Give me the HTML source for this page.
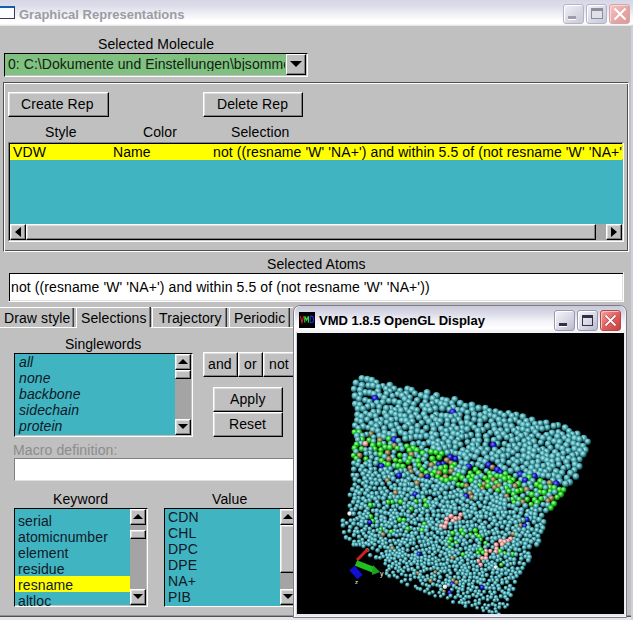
<!DOCTYPE html>
<html><head><meta charset="utf-8">
<style>
*{margin:0;padding:0;box-sizing:border-box}
html,body{width:633px;height:620px;overflow:hidden;background:#c0c0c0;font-family:"Liberation Sans",sans-serif;font-size:14px;color:#000}
.a{position:absolute}
.t{position:absolute;white-space:nowrap;line-height:1;margin-top:-1px;letter-spacing:0.1px}
.btn{position:absolute;background:#c0c0c0;border-top:1px solid #fff;border-left:1px solid #fff;border-right:1px solid #000;border-bottom:1px solid #000;box-shadow:inset -1px -1px 0 #808080, inset 1px 1px 0 #dfdfdf}
.sunk{position:absolute;border-top:1px solid #808080;border-left:1px solid #808080;border-right:1px solid #fff;border-bottom:1px solid #fff;box-shadow:inset 1px 1px 0 #000, inset -1px -1px 0 #dfdfdf}
.groove{position:absolute;border-top:1px solid #505050;border-left:1px solid #505050;border-right:1px solid #fff;border-bottom:1px solid #fff;box-shadow:inset 1px 1px 0 #fff, inset -1px -1px 0 #505050}
.teal{background:#40b4c0}
</style></head><body>
<!-- title bar -->
<div class="a" style="left:0;top:0;width:633px;height:26px;background:linear-gradient(#d6d6e6,#dedeea 25%,#f0f0f6 55%,#ffffff 80%,#ffffff 92%,#e0e0e0)"></div>
<div class="a" style="left:0;top:6px;width:15px;height:13px;border-top:2px solid #1060b0;border-right:1px solid #383858;border-bottom:1px solid #383858;background:#fcfcff"></div>
<div class="t" style="left:19px;top:9px;font-weight:bold;font-size:13px;color:#9c9ca4;letter-spacing:0">Graphical Representations</div>
<!-- main title buttons -->
<div class="a" style="left:563px;top:4px;width:21px;height:20px;border:1px solid #b4b4c8;border-radius:3px;background:linear-gradient(135deg,#f0f0f6,#dcdce6 50%,#c8c8d8);box-shadow:inset 1px 1px 0 #fff"><div class="a" style="left:4px;top:11px;width:8px;height:3px;background:#9c9cac;box-shadow:0 1px 0 #fff"></div></div>
<div class="a" style="left:586px;top:4px;width:21px;height:20px;border:1px solid #b4b4c8;border-radius:3px;background:linear-gradient(135deg,#f0f0f6,#dcdce6 50%,#c8c8d8);box-shadow:inset 1px 1px 0 #fff"><div class="a" style="left:4px;top:3px;width:12px;height:11px;border:1px solid #8c8c9c;border-top-width:3px;background:#e0e0e8"></div></div>
<div class="a" style="left:609px;top:4px;width:21px;height:20px;border:1px solid #d4a4a8;border-radius:3px;background:linear-gradient(135deg,#f4c4c4,#e8a8a8 50%,#dc9898);box-shadow:inset 1px 1px 0 #f8d8d8"><svg class="a" style="left:3px;top:2px" width="14" height="14"><path d="M1.5 1.5L12.5 12.5M12.5 1.5L1.5 12.5" stroke="#fff" stroke-width="2"/></svg></div>

<!-- Selected molecule -->
<div class="t" style="left:98px;top:38px">Selected Molecule</div>
<div class="a" style="left:4px;top:53px;width:304px;height:24px;border-top:1px solid #000;border-left:1px solid #000;border-right:1px solid #fff;border-bottom:1px solid #fff;background:#80c080;box-shadow:inset -1px -1px 0 #c0c0c0"></div>
<div class="t" style="left:8px;top:58px;width:277px;overflow:hidden;color:#102010;letter-spacing:0.05px">0: C:\Dokumente und Einstellungen\bjsommer\</div>
<div class="btn" style="left:286px;top:54px;width:20px;height:21px;box-shadow:inset -1px -1px 0 #808080"><svg class="a" style="left:3px;top:6px" width="12" height="6"><path d="M0 0H12L6 6Z" fill="#000"/></svg></div>

<!-- frame -->
<div class="groove" style="left:3px;top:82px;width:626px;height:170px"></div>
<div class="btn" style="left:8px;top:92px;width:101px;height:25px"></div>
<div class="t" style="left:21px;top:98px">Create Rep</div>
<div class="btn" style="left:203px;top:92px;width:100px;height:25px"></div>
<div class="t" style="left:217px;top:98px">Delete Rep</div>
<div class="t" style="left:45px;top:126px">Style</div>
<div class="t" style="left:143px;top:126px">Color</div>
<div class="t" style="left:231px;top:126px">Selection</div>
<!-- reps listbox -->
<div class="a" style="left:8px;top:142px;width:616px;height:100px;border-top:1px solid #808080;border-left:1px solid #808080;border-right:1px solid #fff;border-bottom:1px solid #fff;background:#000;box-shadow:inset -1px -1px 0 #c8c8c8"></div>
<div class="a teal" style="left:10px;top:144px;width:613px;height:80px;overflow:hidden">
<div class="a" style="left:0;top:0;width:613px;height:16px;background:#ffff00"></div>
<div class="t" style="left:3px;top:2px">VDW</div>
<div class="t" style="left:103px;top:2px">Name</div>
<div class="t" style="left:203px;top:2px">not ((resname 'W' 'NA+') and within 5.5 of (not resname 'W' 'NA+'))</div>
</div>
<div class="a" style="left:10px;top:224px;width:612px;height:16px;background:#a8a8a8"></div>
<div class="btn" style="left:10px;top:224px;width:16px;height:16px"><svg class="a" style="left:4px;top:2px" width="6" height="10"><path d="M6 0V10L0 5Z" fill="#000"/></svg></div>
<div class="btn" style="left:26px;top:224px;width:570px;height:16px"></div>
<div class="btn" style="left:606px;top:224px;width:16px;height:16px"><svg class="a" style="left:4px;top:2px" width="6" height="10"><path d="M0 0V10L6 5Z" fill="#000"/></svg></div>

<!-- selected atoms -->
<div class="t" style="left:267px;top:258px">Selected Atoms</div>
<div class="a" style="left:8px;top:272px;width:616px;height:30px;border-top:1px solid #c0c0c0;border-left:1px solid #c0c0c0;border-right:1px solid #fff;border-bottom:1px solid #fff;background:#fff;box-shadow:inset 1px 1px 0 #000, inset -1px -1px 0 #e0e0e0"></div>
<div class="t" style="left:11px;top:281px">not ((resname 'W' 'NA+') and within 5.5 of (not resname 'W' 'NA+'))</div>

<!-- tabs -->
<div class="a" style="left:0;top:307px;width:293px;height:1px;background:#fff"></div>
<div class="a" style="left:0;top:327px;width:76px;height:1px;background:#fff"></div>
<div class="a" style="left:151px;top:327px;width:142px;height:1px;background:#fff"></div>
<div class="a" style="left:72px;top:308px;width:1px;height:19px;background:#808080"></div>
<div class="a" style="left:73px;top:308px;width:1px;height:19px;background:#404040"></div>
<div class="a" style="left:76px;top:307px;width:1px;height:21px;background:#fff"></div>
<div class="a" style="left:149px;top:307px;width:1px;height:20px;background:#808080"></div>
<div class="a" style="left:150px;top:307px;width:1px;height:20px;background:#303030"></div>
<div class="a" style="left:152px;top:308px;width:1px;height:19px;background:#fff"></div>
<div class="a" style="left:225px;top:308px;width:1px;height:19px;background:#808080"></div>
<div class="a" style="left:226px;top:308px;width:1px;height:19px;background:#303030"></div>
<div class="a" style="left:229px;top:308px;width:1px;height:19px;background:#fff"></div>
<div class="a" style="left:288px;top:308px;width:1px;height:19px;background:#808080"></div>
<div class="a" style="left:289px;top:308px;width:1px;height:19px;background:#303030"></div>
<div class="t" style="left:4px;top:312px">Draw style</div>
<div class="t" style="left:81px;top:312px">Selections</div>
<div class="t" style="left:159px;top:312px">Trajectory</div>
<div class="t" style="left:234px;top:312px">Periodic</div>

<!-- singlewords -->
<div class="t" style="left:65px;top:338px;letter-spacing:0">Singlewords</div>
<div class="a teal" style="left:14px;top:353px;width:179px;height:84px;border-top:1px solid #000;border-left:1px solid #000;border-right:1px solid #fff;border-bottom:1px solid #fff;box-shadow:inset -1px -1px 0 #c0c0c0"></div>
<div class="t" style="left:19px;top:355px;font-style:italic;color:#101828;line-height:16px">all<br>none<br>backbone<br>sidechain<br>protein</div>
<div class="a" style="left:175px;top:354px;width:16px;height:81px;background:#a4a4a4"></div>
<div class="btn" style="left:175px;top:354px;width:16px;height:16px"><svg class="a" style="left:2px;top:4px" width="10" height="5"><path d="M0 5H10L5 0Z" fill="#000"/></svg></div>
<div class="btn" style="left:175px;top:370px;width:16px;height:9px"></div>
<div class="btn" style="left:175px;top:419px;width:16px;height:16px"><svg class="a" style="left:2px;top:4px" width="10" height="5"><path d="M0 0H10L5 5Z" fill="#000"/></svg></div>

<div class="btn" style="left:203px;top:352px;width:35px;height:25px"></div>
<div class="t" style="left:208px;top:358px">and</div>
<div class="btn" style="left:238px;top:352px;width:25px;height:25px"></div>
<div class="t" style="left:244px;top:358px">or</div>
<div class="btn" style="left:263px;top:352px;width:32px;height:25px"></div>
<div class="t" style="left:269px;top:358px">not</div>
<div class="btn" style="left:213px;top:387px;width:70px;height:25px"></div>
<div class="t" style="left:230px;top:393px">Apply</div>
<div class="btn" style="left:213px;top:412px;width:70px;height:25px"></div>
<div class="t" style="left:229px;top:418px">Reset</div>

<div class="t" style="left:13px;top:444px;color:#8c8c8c">Macro definition:</div>
<div class="a" style="left:14px;top:458px;width:290px;height:23px;border-top:1px solid #808080;border-left:1px solid #808080;border-bottom:1px solid #e0e0e0;background:#fff"></div>

<div class="t" style="left:53px;top:493px">Keyword</div>
<div class="a teal" style="left:14px;top:508px;width:134px;height:99px;border-top:1px solid #000;border-left:1px solid #000;border-right:1px solid #fff;border-bottom:1px solid #fff;box-shadow:inset -1px -1px 0 #c0c0c0"></div>
<div class="a" style="left:15px;top:576px;width:115px;height:16px;background:#ffff00"></div>
<div class="t" style="left:18px;top:514px;color:#101828;line-height:16px">serial<br>atomicnumber<br>element<br>residue<br>resname<br>altloc</div>
<div class="a" style="left:130px;top:509px;width:16px;height:97px;background:#a4a4a4"></div>
<div class="btn" style="left:130px;top:509px;width:16px;height:16px"><svg class="a" style="left:2px;top:4px" width="10" height="5"><path d="M0 5H10L5 0Z" fill="#000"/></svg></div>
<div class="btn" style="left:130px;top:530px;width:16px;height:9px"></div>
<div class="btn" style="left:130px;top:589px;width:16px;height:16px"><svg class="a" style="left:2px;top:4px" width="10" height="5"><path d="M0 0H10L5 5Z" fill="#000"/></svg></div>

<div class="t" style="left:212px;top:493px">Value</div>
<div class="a teal" style="left:164px;top:508px;width:140px;height:99px;border-top:1px solid #000;border-left:1px solid #000;border-bottom:1px solid #fff"></div>
<div class="t" style="left:168px;top:510px;color:#101828;line-height:16px">CDN<br>CHL<br>DPC<br>DPE<br>NA+<br>PIB</div>
<div class="a" style="left:280px;top:509px;width:16px;height:97px;background:#a4a4a4"></div>
<div class="btn" style="left:280px;top:509px;width:16px;height:16px"><svg class="a" style="left:2px;top:4px" width="10" height="5"><path d="M0 5H10L5 0Z" fill="#000"/></svg></div>
<div class="btn" style="left:280px;top:525px;width:16px;height:48px"></div>
<div class="btn" style="left:280px;top:589px;width:16px;height:16px"><svg class="a" style="left:2px;top:4px" width="10" height="5"><path d="M0 0H10L5 5Z" fill="#000"/></svg></div>

<div class="a" style="left:0;top:615px;width:633px;height:1px;background:#909090"></div>
<div class="a" style="left:0;top:616px;width:633px;height:1px;background:#505050"></div>
<div class="a" style="left:0;top:617px;width:633px;height:3px;background:#e4e4ea"></div>

<div class="a" style="left:631px;top:25px;width:2px;height:595px;background:#d0d0d8"></div>
<!-- VMD window -->
<div class="a" style="left:293px;top:305px;width:334px;height:313px;border-radius:7px 7px 0 0;background:#f4f4f8;border:1px solid #7c7c8c;box-shadow:inset 1px 1px 0 #ffffff"></div>
<div class="a" style="left:295px;top:306px;width:330px;height:26px;border-radius:6px 6px 0 0;background:linear-gradient(#c8c8d8,#d8d8e6 25%,#f4f4fa 60%,#ffffff 85%,#eeeef4)"></div>
<div class="a" style="left:296px;top:332px;width:329px;height:284px;border-left:1px solid #d0d0d8;border-bottom:2px solid #e8e8f0;border-right:2px solid #e8e8f0"></div>
<div class="a" style="left:297px;top:333px;width:327px;height:281px;background:#000;overflow:hidden">
<svg class="a" style="left:0;top:0" width="327" height="281" viewBox="297 333 327 281">
<defs>
<radialGradient id="st" cx="0.4" cy="0.36" r="0.64"><stop offset="0" stop-color="#bceef0"/><stop offset="0.5" stop-color="#4aa8b0"/><stop offset="1" stop-color="#12383e"/></radialGradient>
<radialGradient id="sg" cx="0.4" cy="0.36" r="0.64"><stop offset="0" stop-color="#c8ffc0"/><stop offset="0.5" stop-color="#20d020"/><stop offset="1" stop-color="#0a600a"/></radialGradient>
<radialGradient id="sb" cx="0.4" cy="0.36" r="0.64"><stop offset="0" stop-color="#8080ff"/><stop offset="0.5" stop-color="#1818c8"/><stop offset="1" stop-color="#000060"/></radialGradient>
<radialGradient id="sp" cx="0.4" cy="0.36" r="0.64"><stop offset="0" stop-color="#fff0f0"/><stop offset="0.5" stop-color="#e89898"/><stop offset="1" stop-color="#704040"/></radialGradient>
<radialGradient id="sn" cx="0.4" cy="0.36" r="0.64"><stop offset="0" stop-color="#e0d0a0"/><stop offset="0.5" stop-color="#8a7850"/><stop offset="1" stop-color="#403010"/></radialGradient>
<radialGradient id="sw" cx="0.4" cy="0.36" r="0.64"><stop offset="0" stop-color="#ffffff"/><stop offset="0.5" stop-color="#f0f0f0"/><stop offset="1" stop-color="#909090"/></radialGradient>
</defs>
<circle cx="361.9" cy="378.4" r="3.5" fill="url(#st)"/>
<circle cx="367.4" cy="379.4" r="3.6" fill="url(#st)"/>
<circle cx="371.9" cy="380.3" r="3.6" fill="url(#st)"/>
<circle cx="376.4" cy="382.6" r="3.1" fill="url(#st)"/>
<circle cx="356.0" cy="382.9" r="3.5" fill="url(#st)"/>
<circle cx="389.8" cy="385.3" r="3.6" fill="url(#st)"/>
<circle cx="362.0" cy="385.4" r="3.6" fill="url(#st)"/>
<circle cx="368.6" cy="385.6" r="3.4" fill="url(#st)"/>
<circle cx="373.1" cy="385.7" r="3.5" fill="url(#st)"/>
<circle cx="382.9" cy="386.0" r="3.1" fill="url(#st)"/>
<circle cx="378.5" cy="387.0" r="3.2" fill="url(#st)"/>
<circle cx="394.2" cy="388.8" r="3.3" fill="url(#st)"/>
<circle cx="386.1" cy="388.9" r="3.2" fill="url(#st)"/>
<circle cx="354.0" cy="389.0" r="3.2" fill="url(#st)"/>
<circle cx="407.5" cy="389.0" r="3.4" fill="url(#st)"/>
<circle cx="360.2" cy="389.9" r="3.5" fill="url(#st)"/>
<circle cx="411.7" cy="390.1" r="3.3" fill="url(#st)"/>
<circle cx="400.1" cy="390.7" r="3.2" fill="url(#st)"/>
<circle cx="390.1" cy="391.2" r="3.1" fill="url(#st)"/>
<circle cx="378.0" cy="391.5" r="3.6" fill="url(#st)"/>
<circle cx="365.5" cy="392.5" r="3.5" fill="url(#st)"/>
<circle cx="427.1" cy="392.7" r="3.6" fill="url(#st)"/>
<circle cx="370.0" cy="392.8" r="3.5" fill="url(#st)"/>
<circle cx="414.8" cy="393.4" r="3.2" fill="url(#st)"/>
<circle cx="386.5" cy="393.7" r="3.3" fill="url(#st)"/>
<circle cx="406.2" cy="393.9" r="3.6" fill="url(#st)"/>
<circle cx="374.0" cy="394.0" r="3.6" fill="url(#st)"/>
<circle cx="397.6" cy="394.3" r="3.3" fill="url(#st)"/>
<circle cx="360.3" cy="394.7" r="3.3" fill="url(#st)"/>
<circle cx="421.0" cy="395.4" r="3.5" fill="url(#st)"/>
<circle cx="436.5" cy="395.6" r="3.6" fill="url(#st)"/>
<circle cx="379.8" cy="395.8" r="3.3" fill="url(#st)"/>
<circle cx="402.3" cy="395.8" r="3.6" fill="url(#st)"/>
<circle cx="355.2" cy="396.0" r="3.7" fill="url(#st)"/>
<circle cx="392.5" cy="396.0" r="3.1" fill="url(#st)"/>
<circle cx="426.1" cy="397.3" r="3.6" fill="url(#st)"/>
<circle cx="409.9" cy="397.4" r="3.2" fill="url(#st)"/>
<circle cx="384.5" cy="397.9" r="3.5" fill="url(#st)"/>
<circle cx="375.0" cy="398.4" r="3.4" fill="url(#sb)"/>
<circle cx="432.9" cy="398.7" r="3.6" fill="url(#st)"/>
<circle cx="359.2" cy="398.9" r="3.3" fill="url(#st)"/>
<circle cx="454.7" cy="399.3" r="3.4" fill="url(#st)"/>
<circle cx="404.9" cy="399.3" r="3.5" fill="url(#st)"/>
<circle cx="442.6" cy="399.7" r="3.3" fill="url(#st)"/>
<circle cx="365.3" cy="400.2" r="3.3" fill="url(#st)"/>
<circle cx="417.2" cy="400.4" r="3.4" fill="url(#st)"/>
<circle cx="446.8" cy="400.8" r="3.6" fill="url(#st)"/>
<circle cx="389.1" cy="400.9" r="3.2" fill="url(#st)"/>
<circle cx="394.8" cy="401.4" r="3.5" fill="url(#st)"/>
<circle cx="369.5" cy="401.7" r="3.3" fill="url(#st)"/>
<circle cx="437.0" cy="401.8" r="3.4" fill="url(#st)"/>
<circle cx="425.3" cy="402.1" r="3.1" fill="url(#st)"/>
<circle cx="382.8" cy="402.3" r="3.4" fill="url(#st)"/>
<circle cx="409.0" cy="402.3" r="3.4" fill="url(#st)"/>
<circle cx="377.0" cy="402.8" r="3.3" fill="url(#st)"/>
<circle cx="399.7" cy="402.8" r="3.4" fill="url(#st)"/>
<circle cx="451.9" cy="403.1" r="3.2" fill="url(#st)"/>
<circle cx="460.3" cy="403.4" r="3.6" fill="url(#st)"/>
<circle cx="432.2" cy="403.6" r="3.2" fill="url(#st)"/>
<circle cx="441.1" cy="403.9" r="3.6" fill="url(#st)"/>
<circle cx="355.3" cy="404.0" r="3.4" fill="url(#st)"/>
<circle cx="413.9" cy="404.1" r="3.2" fill="url(#st)"/>
<circle cx="359.8" cy="404.9" r="3.3" fill="url(#st)"/>
<circle cx="445.6" cy="404.9" r="3.4" fill="url(#st)"/>
<circle cx="471.9" cy="405.3" r="3.7" fill="url(#st)"/>
<circle cx="405.9" cy="405.3" r="3.6" fill="url(#st)"/>
<circle cx="422.6" cy="405.7" r="3.5" fill="url(#st)"/>
<circle cx="372.4" cy="405.8" r="3.6" fill="url(#st)"/>
<circle cx="465.4" cy="406.1" r="3.4" fill="url(#st)"/>
<circle cx="428.3" cy="406.2" r="3.6" fill="url(#st)"/>
<circle cx="367.8" cy="406.6" r="3.4" fill="url(#st)"/>
<circle cx="379.4" cy="407.0" r="3.3" fill="url(#st)"/>
<circle cx="398.4" cy="407.3" r="3.4" fill="url(#st)"/>
<circle cx="453.3" cy="407.5" r="3.5" fill="url(#st)"/>
<circle cx="485.4" cy="408.2" r="3.4" fill="url(#st)"/>
<circle cx="478.6" cy="408.2" r="3.6" fill="url(#st)"/>
<circle cx="390.7" cy="408.3" r="3.4" fill="url(#st)"/>
<circle cx="386.4" cy="408.3" r="3.6" fill="url(#st)"/>
<circle cx="442.5" cy="408.5" r="3.5" fill="url(#st)"/>
<circle cx="435.4" cy="408.5" r="3.6" fill="url(#st)"/>
<circle cx="357.9" cy="408.8" r="3.4" fill="url(#st)"/>
<circle cx="363.2" cy="408.9" r="3.5" fill="url(#st)"/>
<circle cx="412.6" cy="409.0" r="3.7" fill="url(#st)"/>
<circle cx="449.4" cy="409.5" r="3.2" fill="url(#st)"/>
<circle cx="405.8" cy="409.7" r="3.3" fill="url(#st)"/>
<circle cx="425.3" cy="409.9" r="3.4" fill="url(#st)"/>
<circle cx="472.4" cy="410.0" r="3.6" fill="url(#st)"/>
<circle cx="457.7" cy="410.0" r="3.2" fill="url(#st)"/>
<circle cx="462.7" cy="410.1" r="3.3" fill="url(#st)"/>
<circle cx="395.2" cy="410.2" r="3.4" fill="url(#st)"/>
<circle cx="417.1" cy="410.2" r="3.2" fill="url(#st)"/>
<circle cx="430.2" cy="410.4" r="3.3" fill="url(#st)"/>
<circle cx="401.1" cy="410.7" r="3.6" fill="url(#st)"/>
<circle cx="489.5" cy="411.1" r="3.2" fill="url(#st)"/>
<circle cx="495.7" cy="411.4" r="3.2" fill="url(#st)"/>
<circle cx="378.5" cy="412.1" r="3.3" fill="url(#st)"/>
<circle cx="373.5" cy="412.1" r="3.3" fill="url(#st)"/>
<circle cx="452.8" cy="412.2" r="3.5" fill="url(#sb)"/>
<circle cx="409.6" cy="412.3" r="3.3" fill="url(#st)"/>
<circle cx="467.5" cy="412.5" r="3.3" fill="url(#st)"/>
<circle cx="391.7" cy="412.8" r="3.6" fill="url(#st)"/>
<circle cx="384.7" cy="413.0" r="3.2" fill="url(#st)"/>
<circle cx="508.6" cy="413.2" r="3.2" fill="url(#st)"/>
<circle cx="365.8" cy="413.3" r="3.1" fill="url(#st)"/>
<circle cx="485.4" cy="413.4" r="3.5" fill="url(#st)"/>
<circle cx="500.4" cy="413.4" r="3.2" fill="url(#st)"/>
<circle cx="424.0" cy="414.4" r="3.6" fill="url(#st)"/>
<circle cx="474.3" cy="414.5" r="3.4" fill="url(#st)"/>
<circle cx="436.1" cy="414.6" r="3.3" fill="url(#st)"/>
<circle cx="395.8" cy="414.6" r="3.2" fill="url(#st)"/>
<circle cx="415.8" cy="414.7" r="3.3" fill="url(#st)"/>
<circle cx="357.6" cy="414.8" r="3.5" fill="url(#st)"/>
<circle cx="516.2" cy="415.0" r="3.5" fill="url(#st)"/>
<circle cx="459.8" cy="415.0" r="3.2" fill="url(#st)"/>
<circle cx="490.3" cy="415.3" r="3.2" fill="url(#st)"/>
<circle cx="480.5" cy="415.4" r="3.4" fill="url(#st)"/>
<circle cx="370.4" cy="415.4" r="3.7" fill="url(#st)"/>
<circle cx="504.3" cy="415.7" r="3.3" fill="url(#st)"/>
<circle cx="441.8" cy="415.8" r="3.5" fill="url(#st)"/>
<circle cx="455.3" cy="415.9" r="3.4" fill="url(#st)"/>
<circle cx="400.7" cy="415.9" r="3.3" fill="url(#st)"/>
<circle cx="512.0" cy="416.1" r="3.4" fill="url(#st)"/>
<circle cx="375.6" cy="416.1" r="3.2" fill="url(#st)"/>
<circle cx="446.6" cy="416.1" r="3.7" fill="url(#st)"/>
<circle cx="404.9" cy="416.3" r="3.4" fill="url(#st)"/>
<circle cx="386.9" cy="416.7" r="3.7" fill="url(#st)"/>
<circle cx="494.9" cy="416.8" r="3.3" fill="url(#st)"/>
<circle cx="361.6" cy="416.8" r="3.7" fill="url(#st)"/>
<circle cx="522.9" cy="416.8" r="3.6" fill="url(#st)"/>
<circle cx="450.9" cy="417.0" r="3.5" fill="url(#st)"/>
<circle cx="411.6" cy="417.3" r="3.5" fill="url(#st)"/>
<circle cx="432.8" cy="417.3" r="3.5" fill="url(#st)"/>
<circle cx="419.0" cy="417.6" r="3.4" fill="url(#st)"/>
<circle cx="467.4" cy="418.2" r="3.6" fill="url(#st)"/>
<circle cx="426.2" cy="418.3" r="3.4" fill="url(#st)"/>
<circle cx="484.8" cy="418.4" r="3.6" fill="url(#st)"/>
<circle cx="396.2" cy="419.1" r="3.1" fill="url(#st)"/>
<circle cx="367.3" cy="419.6" r="3.3" fill="url(#st)"/>
<circle cx="458.7" cy="419.6" r="3.3" fill="url(#st)"/>
<circle cx="498.9" cy="419.7" r="3.5" fill="url(#st)"/>
<circle cx="515.3" cy="419.7" r="3.2" fill="url(#st)"/>
<circle cx="474.3" cy="419.7" r="3.2" fill="url(#st)"/>
<circle cx="391.4" cy="419.9" r="3.5" fill="url(#st)"/>
<circle cx="381.2" cy="420.0" r="3.6" fill="url(#st)"/>
<circle cx="532.0" cy="420.0" r="3.5" fill="url(#st)"/>
<circle cx="436.1" cy="420.0" r="3.3" fill="url(#st)"/>
<circle cx="357.2" cy="420.2" r="3.2" fill="url(#st)"/>
<circle cx="401.9" cy="420.5" r="3.2" fill="url(#st)"/>
<circle cx="447.5" cy="420.5" r="3.2" fill="url(#st)"/>
<circle cx="376.9" cy="420.7" r="3.5" fill="url(#st)"/>
<circle cx="510.4" cy="420.8" r="3.4" fill="url(#st)"/>
<circle cx="406.3" cy="420.9" r="3.6" fill="url(#st)"/>
<circle cx="480.3" cy="420.9" r="3.3" fill="url(#st)"/>
<circle cx="504.3" cy="421.1" r="3.2" fill="url(#st)"/>
<circle cx="454.1" cy="421.1" r="3.2" fill="url(#st)"/>
<circle cx="526.4" cy="421.2" r="3.4" fill="url(#st)"/>
<circle cx="440.3" cy="421.2" r="3.7" fill="url(#st)"/>
<circle cx="491.5" cy="421.3" r="3.3" fill="url(#st)"/>
<circle cx="412.4" cy="421.7" r="3.5" fill="url(#st)"/>
<circle cx="361.2" cy="421.7" r="3.2" fill="url(#st)"/>
<circle cx="429.1" cy="421.8" r="3.7" fill="url(#st)"/>
<circle cx="386.7" cy="422.5" r="3.3" fill="url(#st)"/>
<circle cx="519.6" cy="422.6" r="3.3" fill="url(#st)"/>
<circle cx="546.2" cy="422.8" r="3.4" fill="url(#st)"/>
<circle cx="466.8" cy="423.0" r="3.6" fill="url(#st)"/>
<circle cx="421.8" cy="423.0" r="3.2" fill="url(#st)"/>
<circle cx="461.5" cy="423.3" r="3.2" fill="url(#st)"/>
<circle cx="540.4" cy="423.5" r="3.3" fill="url(#st)"/>
<circle cx="371.6" cy="423.8" r="3.5" fill="url(#st)"/>
<circle cx="535.0" cy="424.0" r="3.2" fill="url(#st)"/>
<circle cx="499.9" cy="424.0" r="3.3" fill="url(#st)"/>
<circle cx="380.2" cy="424.1" r="3.3" fill="url(#st)"/>
<circle cx="471.1" cy="424.5" r="3.3" fill="url(#st)"/>
<circle cx="408.8" cy="424.5" r="3.6" fill="url(#st)"/>
<circle cx="437.2" cy="424.6" r="3.5" fill="url(#st)"/>
<circle cx="396.2" cy="424.7" r="3.2" fill="url(#st)"/>
<circle cx="523.2" cy="424.9" r="3.5" fill="url(#st)"/>
<circle cx="447.4" cy="425.1" r="3.5" fill="url(#st)"/>
<circle cx="433.0" cy="425.3" r="3.3" fill="url(#st)"/>
<circle cx="558.0" cy="425.3" r="3.3" fill="url(#st)"/>
<circle cx="480.0" cy="425.3" r="3.3" fill="url(#st)"/>
<circle cx="528.2" cy="425.3" r="3.3" fill="url(#st)"/>
<circle cx="355.1" cy="425.4" r="3.2" fill="url(#st)"/>
<circle cx="493.9" cy="425.4" r="3.4" fill="url(#st)"/>
<circle cx="506.3" cy="425.9" r="3.4" fill="url(#st)"/>
<circle cx="553.8" cy="426.0" r="3.4" fill="url(#st)"/>
<circle cx="391.2" cy="426.1" r="3.6" fill="url(#st)"/>
<circle cx="417.6" cy="426.2" r="3.4" fill="url(#st)"/>
<circle cx="453.6" cy="426.2" r="3.2" fill="url(#st)"/>
<circle cx="376.4" cy="426.4" r="3.6" fill="url(#st)"/>
<circle cx="511.7" cy="426.4" r="3.3" fill="url(#st)"/>
<circle cx="363.3" cy="426.5" r="3.5" fill="url(#st)"/>
<circle cx="487.5" cy="426.5" r="3.5" fill="url(#st)"/>
<circle cx="405.2" cy="427.1" r="3.3" fill="url(#st)"/>
<circle cx="368.3" cy="427.6" r="3.1" fill="url(#st)"/>
<circle cx="474.4" cy="427.6" r="3.2" fill="url(#st)"/>
<circle cx="547.4" cy="427.7" r="3.2" fill="url(#st)"/>
<circle cx="565.1" cy="427.7" r="3.5" fill="url(#st)"/>
<circle cx="462.2" cy="428.0" r="3.3" fill="url(#st)"/>
<circle cx="537.1" cy="428.1" r="3.4" fill="url(#st)"/>
<circle cx="426.3" cy="428.1" r="3.3" fill="url(#st)"/>
<circle cx="358.5" cy="428.2" r="3.2" fill="url(#st)"/>
<circle cx="384.4" cy="428.4" r="3.4" fill="url(#st)"/>
<circle cx="411.9" cy="428.6" r="3.3" fill="url(#st)"/>
<circle cx="399.0" cy="428.7" r="3.4" fill="url(#st)"/>
<circle cx="457.1" cy="428.8" r="3.4" fill="url(#st)"/>
<circle cx="542.2" cy="428.8" r="3.2" fill="url(#st)"/>
<circle cx="441.3" cy="429.0" r="3.5" fill="url(#st)"/>
<circle cx="518.2" cy="429.0" r="3.4" fill="url(#st)"/>
<circle cx="532.7" cy="429.1" r="3.6" fill="url(#st)"/>
<circle cx="467.3" cy="429.4" r="3.6" fill="url(#st)"/>
<circle cx="523.0" cy="429.4" r="3.3" fill="url(#st)"/>
<circle cx="433.8" cy="429.6" r="3.5" fill="url(#st)"/>
<circle cx="451.0" cy="429.6" r="3.3" fill="url(#st)"/>
<circle cx="373.0" cy="429.9" r="3.3" fill="url(#st)"/>
<circle cx="494.7" cy="430.0" r="3.6" fill="url(#st)"/>
<circle cx="482.9" cy="430.1" r="3.3" fill="url(#st)"/>
<circle cx="514.0" cy="430.5" r="3.3" fill="url(#st)"/>
<circle cx="507.3" cy="430.5" r="3.2" fill="url(#st)"/>
<circle cx="500.6" cy="430.5" r="3.4" fill="url(#st)"/>
<circle cx="393.8" cy="431.0" r="3.3" fill="url(#st)"/>
<circle cx="478.0" cy="431.0" r="3.6" fill="url(#st)"/>
<circle cx="446.3" cy="431.0" r="3.3" fill="url(#st)"/>
<circle cx="527.9" cy="431.0" r="3.2" fill="url(#st)"/>
<circle cx="377.9" cy="431.1" r="3.3" fill="url(#st)"/>
<circle cx="417.6" cy="431.1" r="3.4" fill="url(#st)"/>
<circle cx="569.1" cy="431.2" r="3.2" fill="url(#st)"/>
<circle cx="354.4" cy="432.1" r="2.9" fill="url(#sg)"/>
<circle cx="359.1" cy="432.2" r="3.0" fill="url(#sg)"/>
<circle cx="422.6" cy="432.3" r="3.2" fill="url(#st)"/>
<circle cx="558.4" cy="432.3" r="3.2" fill="url(#st)"/>
<circle cx="535.5" cy="432.4" r="3.4" fill="url(#st)"/>
<circle cx="461.9" cy="432.5" r="3.2" fill="url(#st)"/>
<circle cx="401.0" cy="432.6" r="3.4" fill="url(#st)"/>
<circle cx="384.7" cy="432.8" r="3.5" fill="url(#st)"/>
<circle cx="411.3" cy="432.8" r="3.5" fill="url(#st)"/>
<circle cx="490.3" cy="432.9" r="3.2" fill="url(#st)"/>
<circle cx="552.1" cy="433.1" r="3.6" fill="url(#st)"/>
<circle cx="517.5" cy="433.3" r="3.3" fill="url(#st)"/>
<circle cx="497.3" cy="433.5" r="3.5" fill="url(#st)"/>
<circle cx="431.9" cy="433.7" r="3.3" fill="url(#st)"/>
<circle cx="453.7" cy="433.8" r="3.7" fill="url(#st)"/>
<circle cx="577.3" cy="434.0" r="3.5" fill="url(#st)"/>
<circle cx="370.7" cy="434.1" r="3.1" fill="url(#sn)"/>
<circle cx="442.5" cy="434.1" r="3.1" fill="url(#st)"/>
<circle cx="389.5" cy="434.2" r="3.4" fill="url(#st)"/>
<circle cx="405.3" cy="434.3" r="3.4" fill="url(#st)"/>
<circle cx="572.5" cy="434.4" r="3.2" fill="url(#st)"/>
<circle cx="366.7" cy="434.4" r="2.9" fill="url(#st)"/>
<circle cx="503.6" cy="434.4" r="3.5" fill="url(#st)"/>
<circle cx="458.1" cy="434.5" r="3.2" fill="url(#st)"/>
<circle cx="562.0" cy="434.6" r="3.4" fill="url(#st)"/>
<circle cx="525.7" cy="434.9" r="3.6" fill="url(#st)"/>
<circle cx="471.0" cy="435.1" r="3.4" fill="url(#st)"/>
<circle cx="436.0" cy="435.2" r="3.6" fill="url(#st)"/>
<circle cx="546.7" cy="435.3" r="3.6" fill="url(#st)"/>
<circle cx="447.1" cy="435.5" r="3.3" fill="url(#st)"/>
<circle cx="393.8" cy="435.5" r="3.4" fill="url(#st)"/>
<circle cx="478.4" cy="435.6" r="3.5" fill="url(#st)"/>
<circle cx="538.6" cy="435.6" r="3.2" fill="url(#st)"/>
<circle cx="362.4" cy="435.8" r="3.2" fill="url(#st)"/>
<circle cx="379.7" cy="435.8" r="3.6" fill="url(#st)"/>
<circle cx="357.0" cy="435.9" r="3.3" fill="url(#st)"/>
<circle cx="426.5" cy="436.1" r="3.6" fill="url(#st)"/>
<circle cx="521.2" cy="436.1" r="3.6" fill="url(#st)"/>
<circle cx="511.1" cy="436.2" r="3.3" fill="url(#st)"/>
<circle cx="486.3" cy="436.5" r="3.6" fill="url(#st)"/>
<circle cx="466.3" cy="436.5" r="3.2" fill="url(#st)"/>
<circle cx="531.9" cy="436.5" r="3.3" fill="url(#st)"/>
<circle cx="416.3" cy="436.7" r="3.5" fill="url(#st)"/>
<circle cx="557.6" cy="436.7" r="3.7" fill="url(#st)"/>
<circle cx="568.6" cy="436.7" r="3.6" fill="url(#st)"/>
<circle cx="420.7" cy="436.9" r="3.1" fill="url(#st)"/>
<circle cx="461.8" cy="437.0" r="3.2" fill="url(#st)"/>
<circle cx="383.9" cy="437.0" r="3.6" fill="url(#st)"/>
<circle cx="373.7" cy="437.1" r="2.9" fill="url(#st)"/>
<circle cx="506.9" cy="437.5" r="3.3" fill="url(#st)"/>
<circle cx="499.3" cy="437.7" r="3.4" fill="url(#st)"/>
<circle cx="410.4" cy="438.0" r="3.5" fill="url(#st)"/>
<circle cx="564.6" cy="438.2" r="3.3" fill="url(#st)"/>
<circle cx="542.9" cy="438.2" r="3.6" fill="url(#st)"/>
<circle cx="583.9" cy="438.3" r="3.5" fill="url(#st)"/>
<circle cx="432.5" cy="438.4" r="3.6" fill="url(#st)"/>
<circle cx="451.5" cy="438.4" r="3.4" fill="url(#st)"/>
<circle cx="574.7" cy="438.4" r="3.6" fill="url(#st)"/>
<circle cx="405.5" cy="438.6" r="3.5" fill="url(#st)"/>
<circle cx="444.5" cy="438.8" r="3.3" fill="url(#st)"/>
<circle cx="388.8" cy="438.9" r="3.0" fill="url(#sg)"/>
<circle cx="549.6" cy="439.1" r="3.3" fill="url(#st)"/>
<circle cx="528.6" cy="439.3" r="3.3" fill="url(#st)"/>
<circle cx="579.4" cy="439.5" r="3.4" fill="url(#st)"/>
<circle cx="458.3" cy="439.5" r="3.1" fill="url(#st)"/>
<circle cx="517.3" cy="439.5" r="3.6" fill="url(#st)"/>
<circle cx="362.1" cy="439.6" r="3.0" fill="url(#sg)"/>
<circle cx="357.9" cy="439.8" r="3.0" fill="url(#st)"/>
<circle cx="394.2" cy="439.8" r="3.6" fill="url(#sb)"/>
<circle cx="494.0" cy="440.2" r="3.4" fill="url(#st)"/>
<circle cx="369.2" cy="440.3" r="3.0" fill="url(#sg)"/>
<circle cx="379.9" cy="440.5" r="3.1" fill="url(#sn)"/>
<circle cx="474.2" cy="440.7" r="3.3" fill="url(#st)"/>
<circle cx="512.3" cy="440.7" r="3.4" fill="url(#st)"/>
<circle cx="479.1" cy="440.7" r="3.3" fill="url(#st)"/>
<circle cx="486.9" cy="440.8" r="3.2" fill="url(#st)"/>
<circle cx="398.4" cy="440.8" r="3.1" fill="url(#st)"/>
<circle cx="568.6" cy="441.2" r="3.5" fill="url(#st)"/>
<circle cx="524.4" cy="441.2" r="3.3" fill="url(#st)"/>
<circle cx="438.2" cy="441.2" r="3.3" fill="url(#st)"/>
<circle cx="373.5" cy="441.4" r="3.0" fill="url(#st)"/>
<circle cx="554.4" cy="441.4" r="3.4" fill="url(#st)"/>
<circle cx="533.9" cy="441.7" r="3.6" fill="url(#st)"/>
<circle cx="587.7" cy="441.7" r="3.3" fill="url(#st)"/>
<circle cx="559.8" cy="442.2" r="3.6" fill="url(#st)"/>
<circle cx="467.6" cy="442.2" r="3.2" fill="url(#st)"/>
<circle cx="448.7" cy="442.3" r="3.5" fill="url(#st)"/>
<circle cx="429.1" cy="442.5" r="3.6" fill="url(#st)"/>
<circle cx="540.9" cy="442.6" r="3.2" fill="url(#st)"/>
<circle cx="455.6" cy="442.9" r="3.6" fill="url(#st)"/>
<circle cx="418.9" cy="443.1" r="3.2" fill="url(#st)"/>
<circle cx="361.0" cy="443.4" r="3.0" fill="url(#st)"/>
<circle cx="383.8" cy="443.7" r="3.0" fill="url(#st)"/>
<circle cx="433.7" cy="443.7" r="3.5" fill="url(#st)"/>
<circle cx="573.5" cy="443.7" r="3.4" fill="url(#st)"/>
<circle cx="390.5" cy="443.8" r="3.0" fill="url(#st)"/>
<circle cx="365.5" cy="443.8" r="3.0" fill="url(#sp)"/>
<circle cx="497.6" cy="443.8" r="3.2" fill="url(#st)"/>
<circle cx="548.1" cy="443.9" r="3.5" fill="url(#st)"/>
<circle cx="504.6" cy="443.9" r="3.2" fill="url(#st)"/>
<circle cx="529.5" cy="444.1" r="3.4" fill="url(#st)"/>
<circle cx="442.1" cy="444.1" r="3.5" fill="url(#st)"/>
<circle cx="424.0" cy="444.3" r="3.2" fill="url(#st)"/>
<circle cx="379.4" cy="444.3" r="3.0" fill="url(#sg)"/>
<circle cx="413.3" cy="444.4" r="3.5" fill="url(#st)"/>
<circle cx="356.6" cy="444.5" r="3.0" fill="url(#sg)"/>
<circle cx="460.6" cy="444.6" r="3.2" fill="url(#st)"/>
<circle cx="519.7" cy="444.8" r="3.1" fill="url(#st)"/>
<circle cx="485.4" cy="444.9" r="3.2" fill="url(#st)"/>
<circle cx="578.2" cy="445.0" r="3.2" fill="url(#st)"/>
<circle cx="493.3" cy="445.1" r="3.4" fill="url(#sb)"/>
<circle cx="477.1" cy="445.2" r="3.6" fill="url(#st)"/>
<circle cx="472.7" cy="445.3" r="3.4" fill="url(#st)"/>
<circle cx="566.4" cy="445.3" r="3.6" fill="url(#st)"/>
<circle cx="400.7" cy="445.5" r="3.2" fill="url(#st)"/>
<circle cx="437.6" cy="445.5" r="3.5" fill="url(#st)"/>
<circle cx="372.9" cy="445.5" r="3.2" fill="url(#sg)"/>
<circle cx="394.3" cy="445.8" r="3.0" fill="url(#sn)"/>
<circle cx="514.0" cy="445.9" r="3.5" fill="url(#st)"/>
<circle cx="525.4" cy="446.1" r="3.4" fill="url(#st)"/>
<circle cx="583.1" cy="446.1" r="3.4" fill="url(#st)"/>
<circle cx="509.2" cy="446.2" r="3.1" fill="url(#st)"/>
<circle cx="406.9" cy="446.3" r="3.0" fill="url(#sg)"/>
<circle cx="449.0" cy="446.5" r="3.4" fill="url(#st)"/>
<circle cx="558.0" cy="446.7" r="3.6" fill="url(#st)"/>
<circle cx="535.9" cy="446.8" r="3.3" fill="url(#st)"/>
<circle cx="385.1" cy="447.3" r="3.1" fill="url(#sg)"/>
<circle cx="455.5" cy="447.5" r="3.2" fill="url(#st)"/>
<circle cx="389.9" cy="447.6" r="3.2" fill="url(#sg)"/>
<circle cx="469.0" cy="447.8" r="3.1" fill="url(#st)"/>
<circle cx="421.7" cy="447.8" r="2.9" fill="url(#st)"/>
<circle cx="444.8" cy="447.8" r="3.5" fill="url(#st)"/>
<circle cx="550.5" cy="448.0" r="3.3" fill="url(#st)"/>
<circle cx="354.6" cy="448.2" r="3.1" fill="url(#sg)"/>
<circle cx="433.8" cy="448.2" r="3.7" fill="url(#st)"/>
<circle cx="397.4" cy="448.4" r="2.9" fill="url(#sg)"/>
<circle cx="413.3" cy="448.5" r="3.2" fill="url(#sg)"/>
<circle cx="562.5" cy="448.6" r="3.4" fill="url(#st)"/>
<circle cx="361.7" cy="448.9" r="3.0" fill="url(#sg)"/>
<circle cx="529.8" cy="449.0" r="3.5" fill="url(#st)"/>
<circle cx="574.6" cy="449.0" r="3.6" fill="url(#st)"/>
<circle cx="402.2" cy="449.1" r="3.0" fill="url(#st)"/>
<circle cx="517.0" cy="449.1" r="3.5" fill="url(#st)"/>
<circle cx="374.9" cy="449.1" r="2.9" fill="url(#sg)"/>
<circle cx="370.7" cy="449.2" r="2.8" fill="url(#st)"/>
<circle cx="542.8" cy="449.4" r="3.3" fill="url(#st)"/>
<circle cx="480.9" cy="449.4" r="3.7" fill="url(#st)"/>
<circle cx="439.3" cy="449.5" r="3.7" fill="url(#st)"/>
<circle cx="487.5" cy="449.6" r="3.3" fill="url(#st)"/>
<circle cx="473.4" cy="449.6" r="3.6" fill="url(#st)"/>
<circle cx="365.6" cy="449.8" r="2.8" fill="url(#st)"/>
<circle cx="494.8" cy="449.9" r="3.3" fill="url(#st)"/>
<circle cx="381.0" cy="450.0" r="2.9" fill="url(#sg)"/>
<circle cx="585.3" cy="450.1" r="3.5" fill="url(#st)"/>
<circle cx="416.9" cy="450.3" r="3.2" fill="url(#sg)"/>
<circle cx="503.1" cy="450.3" r="3.5" fill="url(#st)"/>
<circle cx="538.7" cy="450.4" r="3.2" fill="url(#st)"/>
<circle cx="409.5" cy="450.4" r="3.2" fill="url(#sg)"/>
<circle cx="463.0" cy="450.5" r="3.6" fill="url(#st)"/>
<circle cx="509.1" cy="450.5" r="3.5" fill="url(#st)"/>
<circle cx="523.6" cy="450.7" r="3.6" fill="url(#st)"/>
<circle cx="426.7" cy="450.8" r="3.1" fill="url(#st)"/>
<circle cx="580.1" cy="450.9" r="3.6" fill="url(#st)"/>
<circle cx="568.4" cy="451.0" r="3.6" fill="url(#st)"/>
<circle cx="534.1" cy="451.2" r="3.5" fill="url(#st)"/>
<circle cx="356.1" cy="451.7" r="3.1" fill="url(#st)"/>
<circle cx="546.7" cy="451.8" r="3.6" fill="url(#st)"/>
<circle cx="431.2" cy="451.9" r="3.1" fill="url(#sg)"/>
<circle cx="451.8" cy="452.0" r="3.4" fill="url(#st)"/>
<circle cx="467.5" cy="452.1" r="3.2" fill="url(#st)"/>
<circle cx="477.5" cy="452.1" r="3.6" fill="url(#st)"/>
<circle cx="394.1" cy="452.1" r="2.8" fill="url(#st)"/>
<circle cx="513.1" cy="452.4" r="3.2" fill="url(#st)"/>
<circle cx="555.2" cy="452.5" r="3.6" fill="url(#st)"/>
<circle cx="436.1" cy="452.6" r="2.9" fill="url(#sg)"/>
<circle cx="499.4" cy="452.7" r="3.6" fill="url(#st)"/>
<circle cx="447.4" cy="452.7" r="3.4" fill="url(#st)"/>
<circle cx="387.7" cy="452.9" r="3.1" fill="url(#sn)"/>
<circle cx="484.5" cy="453.3" r="3.4" fill="url(#st)"/>
<circle cx="563.3" cy="453.3" r="3.2" fill="url(#st)"/>
<circle cx="370.0" cy="453.4" r="3.2" fill="url(#st)"/>
<circle cx="422.8" cy="453.4" r="3.3" fill="url(#sg)"/>
<circle cx="455.9" cy="453.4" r="3.2" fill="url(#st)"/>
<circle cx="529.3" cy="453.4" r="3.3" fill="url(#st)"/>
<circle cx="366.1" cy="453.7" r="2.8" fill="url(#st)"/>
<circle cx="441.8" cy="453.7" r="3.0" fill="url(#sg)"/>
<circle cx="542.6" cy="453.8" r="3.2" fill="url(#st)"/>
<circle cx="460.4" cy="453.9" r="3.3" fill="url(#st)"/>
<circle cx="375.9" cy="454.0" r="2.9" fill="url(#st)"/>
<circle cx="583.2" cy="454.2" r="3.5" fill="url(#st)"/>
<circle cx="576.9" cy="454.2" r="3.2" fill="url(#st)"/>
<circle cx="492.3" cy="454.2" r="3.4" fill="url(#st)"/>
<circle cx="380.6" cy="454.5" r="3.1" fill="url(#sg)"/>
<circle cx="415.9" cy="454.6" r="3.2" fill="url(#st)"/>
<circle cx="411.4" cy="454.6" r="3.2" fill="url(#sn)"/>
<circle cx="399.9" cy="455.3" r="2.8" fill="url(#sg)"/>
<circle cx="464.6" cy="455.3" r="3.6" fill="url(#st)"/>
<circle cx="558.4" cy="455.4" r="3.3" fill="url(#st)"/>
<circle cx="353.5" cy="455.5" r="2.7" fill="url(#sg)"/>
<circle cx="359.6" cy="455.6" r="3.1" fill="url(#sn)"/>
<circle cx="572.5" cy="455.6" r="3.5" fill="url(#st)"/>
<circle cx="507.6" cy="455.6" r="3.4" fill="url(#st)"/>
<circle cx="470.7" cy="455.8" r="3.2" fill="url(#st)"/>
<circle cx="405.2" cy="456.0" r="3.2" fill="url(#st)"/>
<circle cx="518.1" cy="456.0" r="3.3" fill="url(#st)"/>
<circle cx="546.8" cy="456.1" r="3.3" fill="url(#st)"/>
<circle cx="425.9" cy="456.1" r="3.1" fill="url(#st)"/>
<circle cx="533.2" cy="456.1" r="3.6" fill="url(#st)"/>
<circle cx="524.2" cy="456.3" r="3.6" fill="url(#st)"/>
<circle cx="503.2" cy="456.4" r="3.5" fill="url(#st)"/>
<circle cx="496.7" cy="456.6" r="3.4" fill="url(#st)"/>
<circle cx="552.6" cy="456.7" r="3.6" fill="url(#st)"/>
<circle cx="384.7" cy="456.8" r="3.2" fill="url(#st)"/>
<circle cx="475.2" cy="457.0" r="3.6" fill="url(#st)"/>
<circle cx="538.3" cy="457.1" r="3.2" fill="url(#st)"/>
<circle cx="418.9" cy="457.1" r="2.8" fill="url(#st)"/>
<circle cx="392.9" cy="457.2" r="3.1" fill="url(#st)"/>
<circle cx="450.2" cy="457.4" r="3.2" fill="url(#sb)"/>
<circle cx="371.6" cy="457.4" r="2.7" fill="url(#st)"/>
<circle cx="439.3" cy="457.4" r="3.1" fill="url(#sg)"/>
<circle cx="487.2" cy="458.1" r="3.5" fill="url(#st)"/>
<circle cx="528.7" cy="458.2" r="3.5" fill="url(#st)"/>
<circle cx="568.8" cy="458.3" r="3.4" fill="url(#st)"/>
<circle cx="356.3" cy="458.5" r="2.8" fill="url(#sg)"/>
<circle cx="459.4" cy="458.5" r="2.9" fill="url(#st)"/>
<circle cx="562.8" cy="458.6" r="3.3" fill="url(#st)"/>
<circle cx="410.2" cy="458.7" r="3.2" fill="url(#sg)"/>
<circle cx="543.3" cy="458.8" r="3.5" fill="url(#st)"/>
<circle cx="432.4" cy="458.8" r="3.3" fill="url(#sg)"/>
<circle cx="365.9" cy="458.9" r="2.7" fill="url(#sg)"/>
<circle cx="467.0" cy="458.9" r="3.7" fill="url(#st)"/>
<circle cx="455.5" cy="459.0" r="2.9" fill="url(#sb)"/>
<circle cx="388.9" cy="459.1" r="3.1" fill="url(#sn)"/>
<circle cx="492.7" cy="459.1" r="3.1" fill="url(#st)"/>
<circle cx="579.6" cy="459.4" r="3.2" fill="url(#st)"/>
<circle cx="377.1" cy="459.5" r="3.1" fill="url(#st)"/>
<circle cx="423.9" cy="459.6" r="3.1" fill="url(#st)"/>
<circle cx="513.4" cy="459.7" r="3.4" fill="url(#st)"/>
<circle cx="404.9" cy="459.8" r="3.0" fill="url(#st)"/>
<circle cx="558.1" cy="460.1" r="3.4" fill="url(#st)"/>
<circle cx="395.5" cy="460.2" r="2.8" fill="url(#sg)"/>
<circle cx="574.1" cy="460.2" r="3.3" fill="url(#st)"/>
<circle cx="446.8" cy="460.3" r="3.1" fill="url(#sn)"/>
<circle cx="480.5" cy="460.3" r="3.6" fill="url(#st)"/>
<circle cx="547.2" cy="460.6" r="3.5" fill="url(#st)"/>
<circle cx="381.7" cy="460.8" r="3.0" fill="url(#sg)"/>
<circle cx="413.9" cy="461.1" r="2.9" fill="url(#st)"/>
<circle cx="400.4" cy="461.1" r="2.7" fill="url(#sg)"/>
<circle cx="521.5" cy="461.1" r="3.5" fill="url(#st)"/>
<circle cx="358.9" cy="461.1" r="2.7" fill="url(#st)"/>
<circle cx="502.9" cy="461.1" r="3.4" fill="url(#st)"/>
<circle cx="418.0" cy="461.1" r="3.2" fill="url(#sg)"/>
<circle cx="552.1" cy="461.7" r="3.5" fill="url(#st)"/>
<circle cx="497.8" cy="461.8" r="3.4" fill="url(#st)"/>
<circle cx="485.1" cy="461.8" r="3.4" fill="url(#st)"/>
<circle cx="538.0" cy="461.9" r="3.5" fill="url(#st)"/>
<circle cx="369.8" cy="462.0" r="3.1" fill="url(#st)"/>
<circle cx="408.2" cy="462.0" r="2.9" fill="url(#sg)"/>
<circle cx="517.3" cy="462.1" r="3.4" fill="url(#st)"/>
<circle cx="566.5" cy="462.2" r="3.5" fill="url(#st)"/>
<circle cx="509.4" cy="462.7" r="3.3" fill="url(#st)"/>
<circle cx="532.8" cy="462.9" r="3.4" fill="url(#st)"/>
<circle cx="451.1" cy="463.0" r="2.8" fill="url(#sn)"/>
<circle cx="461.7" cy="463.0" r="3.3" fill="url(#st)"/>
<circle cx="353.9" cy="463.1" r="2.9" fill="url(#st)"/>
<circle cx="435.0" cy="463.3" r="3.1" fill="url(#sg)"/>
<circle cx="426.7" cy="463.3" r="2.8" fill="url(#st)"/>
<circle cx="375.8" cy="463.3" r="3.1" fill="url(#st)"/>
<circle cx="466.0" cy="463.6" r="3.1" fill="url(#st)"/>
<circle cx="443.2" cy="463.7" r="2.8" fill="url(#sb)"/>
<circle cx="384.6" cy="463.8" r="3.0" fill="url(#sg)"/>
<circle cx="472.1" cy="463.9" r="2.9" fill="url(#st)"/>
<circle cx="526.8" cy="464.0" r="3.6" fill="url(#st)"/>
<circle cx="365.9" cy="464.1" r="3.1" fill="url(#st)"/>
<circle cx="438.7" cy="464.4" r="3.0" fill="url(#sb)"/>
<circle cx="454.7" cy="464.4" r="2.8" fill="url(#sg)"/>
<circle cx="558.9" cy="464.4" r="3.2" fill="url(#st)"/>
<circle cx="478.2" cy="464.5" r="3.3" fill="url(#st)"/>
<circle cx="575.0" cy="464.6" r="3.5" fill="url(#st)"/>
<circle cx="388.3" cy="464.6" r="3.0" fill="url(#sg)"/>
<circle cx="357.9" cy="464.8" r="2.9" fill="url(#st)"/>
<circle cx="548.4" cy="464.9" r="3.6" fill="url(#st)"/>
<circle cx="488.6" cy="465.0" r="3.2" fill="url(#sb)"/>
<circle cx="431.5" cy="465.1" r="3.2" fill="url(#sn)"/>
<circle cx="415.4" cy="465.2" r="3.0" fill="url(#st)"/>
<circle cx="419.3" cy="465.5" r="2.8" fill="url(#sg)"/>
<circle cx="370.1" cy="465.7" r="2.8" fill="url(#st)"/>
<circle cx="394.5" cy="465.9" r="3.1" fill="url(#st)"/>
<circle cx="398.3" cy="466.1" r="3.1" fill="url(#sg)"/>
<circle cx="543.5" cy="466.1" r="3.3" fill="url(#st)"/>
<circle cx="514.5" cy="466.1" r="3.5" fill="url(#st)"/>
<circle cx="381.4" cy="466.2" r="3.1" fill="url(#sb)"/>
<circle cx="552.8" cy="466.3" r="3.4" fill="url(#st)"/>
<circle cx="403.0" cy="466.4" r="3.0" fill="url(#sg)"/>
<circle cx="579.3" cy="466.4" r="3.4" fill="url(#st)"/>
<circle cx="500.6" cy="466.6" r="3.6" fill="url(#st)"/>
<circle cx="567.9" cy="466.6" r="3.4" fill="url(#st)"/>
<circle cx="482.1" cy="466.6" r="2.9" fill="url(#st)"/>
<circle cx="537.5" cy="466.6" r="3.6" fill="url(#st)"/>
<circle cx="468.7" cy="466.7" r="3.2" fill="url(#sb)"/>
<circle cx="424.7" cy="466.8" r="3.1" fill="url(#st)"/>
<circle cx="362.4" cy="466.9" r="3.1" fill="url(#st)"/>
<circle cx="459.4" cy="467.1" r="3.1" fill="url(#st)"/>
<circle cx="445.2" cy="467.3" r="3.1" fill="url(#sg)"/>
<circle cx="492.5" cy="467.3" r="2.9" fill="url(#sn)"/>
<circle cx="452.1" cy="467.4" r="3.1" fill="url(#sg)"/>
<circle cx="523.0" cy="467.8" r="3.3" fill="url(#st)"/>
<circle cx="410.0" cy="467.9" r="2.7" fill="url(#sn)"/>
<circle cx="531.5" cy="468.1" r="3.7" fill="url(#st)"/>
<circle cx="563.6" cy="468.2" r="3.3" fill="url(#st)"/>
<circle cx="435.5" cy="468.2" r="3.0" fill="url(#st)"/>
<circle cx="440.9" cy="468.3" r="3.2" fill="url(#sg)"/>
<circle cx="504.6" cy="468.5" r="3.6" fill="url(#st)"/>
<circle cx="465.0" cy="468.5" r="3.3" fill="url(#st)"/>
<circle cx="390.4" cy="468.9" r="2.8" fill="url(#st)"/>
<circle cx="374.8" cy="469.1" r="2.7" fill="url(#st)"/>
<circle cx="353.9" cy="469.2" r="3.0" fill="url(#st)"/>
<circle cx="371.1" cy="469.4" r="2.7" fill="url(#st)"/>
<circle cx="475.5" cy="469.5" r="2.9" fill="url(#sg)"/>
<circle cx="517.5" cy="469.5" r="3.5" fill="url(#st)"/>
<circle cx="549.2" cy="469.6" r="3.6" fill="url(#st)"/>
<circle cx="385.4" cy="469.6" r="3.1" fill="url(#st)"/>
<circle cx="422.1" cy="469.7" r="2.9" fill="url(#sg)"/>
<circle cx="497.2" cy="469.8" r="3.3" fill="url(#sb)"/>
<circle cx="456.2" cy="469.8" r="3.1" fill="url(#st)"/>
<circle cx="415.3" cy="470.0" r="3.0" fill="url(#st)"/>
<circle cx="360.5" cy="470.0" r="2.6" fill="url(#st)"/>
<circle cx="430.4" cy="470.1" r="3.1" fill="url(#st)"/>
<circle cx="574.4" cy="470.1" r="3.3" fill="url(#st)"/>
<circle cx="380.9" cy="470.4" r="2.7" fill="url(#st)"/>
<circle cx="540.8" cy="470.6" r="3.2" fill="url(#st)"/>
<circle cx="404.9" cy="470.7" r="2.9" fill="url(#st)"/>
<circle cx="400.8" cy="470.7" r="2.8" fill="url(#st)"/>
<circle cx="486.5" cy="470.8" r="2.9" fill="url(#st)"/>
<circle cx="510.8" cy="470.9" r="3.5" fill="url(#st)"/>
<circle cx="365.7" cy="471.0" r="2.8" fill="url(#st)"/>
<circle cx="526.3" cy="471.1" r="3.1" fill="url(#st)"/>
<circle cx="451.1" cy="471.4" r="3.2" fill="url(#sn)"/>
<circle cx="445.3" cy="471.5" r="3.0" fill="url(#sg)"/>
<circle cx="534.8" cy="471.7" r="3.3" fill="url(#st)"/>
<circle cx="459.4" cy="471.8" r="3.2" fill="url(#st)"/>
<circle cx="556.2" cy="471.8" r="3.7" fill="url(#st)"/>
<circle cx="411.0" cy="471.8" r="2.9" fill="url(#sn)"/>
<circle cx="545.6" cy="471.9" r="3.3" fill="url(#st)"/>
<circle cx="463.4" cy="472.1" r="3.2" fill="url(#st)"/>
<circle cx="434.8" cy="472.1" r="3.2" fill="url(#sg)"/>
<circle cx="396.9" cy="472.3" r="3.0" fill="url(#st)"/>
<circle cx="500.6" cy="472.5" r="3.0" fill="url(#sb)"/>
<circle cx="387.8" cy="472.6" r="3.0" fill="url(#st)"/>
<circle cx="369.9" cy="472.8" r="2.8" fill="url(#st)"/>
<circle cx="418.1" cy="473.0" r="3.0" fill="url(#st)"/>
<circle cx="562.0" cy="473.0" r="3.4" fill="url(#st)"/>
<circle cx="426.5" cy="473.0" r="3.0" fill="url(#sg)"/>
<circle cx="470.3" cy="473.1" r="2.8" fill="url(#sg)"/>
<circle cx="489.6" cy="473.1" r="2.8" fill="url(#sg)"/>
<circle cx="439.1" cy="473.1" r="3.1" fill="url(#sn)"/>
<circle cx="570.6" cy="473.2" r="3.6" fill="url(#st)"/>
<circle cx="478.8" cy="473.2" r="3.3" fill="url(#sg)"/>
<circle cx="530.0" cy="473.4" r="3.6" fill="url(#st)"/>
<circle cx="375.8" cy="473.7" r="3.0" fill="url(#st)"/>
<circle cx="493.6" cy="473.8" r="2.9" fill="url(#st)"/>
<circle cx="383.7" cy="473.8" r="2.9" fill="url(#st)"/>
<circle cx="505.5" cy="473.9" r="3.0" fill="url(#sg)"/>
<circle cx="363.1" cy="474.1" r="3.0" fill="url(#st)"/>
<circle cx="407.5" cy="474.2" r="3.1" fill="url(#st)"/>
<circle cx="454.5" cy="474.4" r="2.8" fill="url(#st)"/>
<circle cx="538.7" cy="474.5" r="3.6" fill="url(#st)"/>
<circle cx="520.4" cy="474.5" r="3.6" fill="url(#sb)"/>
<circle cx="392.1" cy="474.6" r="3.1" fill="url(#st)"/>
<circle cx="432.0" cy="475.0" r="2.8" fill="url(#sg)"/>
<circle cx="353.1" cy="475.1" r="2.7" fill="url(#st)"/>
<circle cx="458.3" cy="475.4" r="3.0" fill="url(#sg)"/>
<circle cx="553.6" cy="475.5" r="3.4" fill="url(#st)"/>
<circle cx="357.0" cy="475.5" r="2.8" fill="url(#st)"/>
<circle cx="404.0" cy="475.5" r="2.9" fill="url(#st)"/>
<circle cx="543.3" cy="475.5" r="3.3" fill="url(#st)"/>
<circle cx="398.9" cy="475.6" r="2.9" fill="url(#sb)"/>
<circle cx="524.7" cy="475.6" r="3.2" fill="url(#st)"/>
<circle cx="372.8" cy="475.6" r="2.6" fill="url(#st)"/>
<circle cx="421.2" cy="475.7" r="3.0" fill="url(#sn)"/>
<circle cx="515.5" cy="475.7" r="2.9" fill="url(#st)"/>
<circle cx="481.5" cy="475.9" r="3.2" fill="url(#st)"/>
<circle cx="368.1" cy="475.9" r="2.7" fill="url(#st)"/>
<circle cx="548.8" cy="476.0" r="3.4" fill="url(#st)"/>
<circle cx="497.1" cy="476.1" r="3.1" fill="url(#sg)"/>
<circle cx="534.4" cy="476.2" r="3.2" fill="url(#sb)"/>
<circle cx="379.2" cy="476.4" r="2.8" fill="url(#st)"/>
<circle cx="501.1" cy="476.4" r="2.9" fill="url(#sg)"/>
<circle cx="472.7" cy="476.4" r="3.2" fill="url(#sg)"/>
<circle cx="427.6" cy="476.5" r="3.0" fill="url(#sb)"/>
<circle cx="575.9" cy="476.5" r="3.5" fill="url(#st)"/>
<circle cx="412.3" cy="476.7" r="3.0" fill="url(#st)"/>
<circle cx="437.7" cy="476.8" r="2.8" fill="url(#sg)"/>
<circle cx="490.5" cy="476.8" r="3.2" fill="url(#sg)"/>
<circle cx="445.3" cy="477.1" r="3.1" fill="url(#sn)"/>
<circle cx="389.1" cy="477.2" r="2.9" fill="url(#st)"/>
<circle cx="468.7" cy="477.2" r="2.8" fill="url(#sg)"/>
<circle cx="558.7" cy="477.3" r="3.5" fill="url(#st)"/>
<circle cx="385.0" cy="477.5" r="2.9" fill="url(#st)"/>
<circle cx="529.2" cy="477.6" r="3.3" fill="url(#sg)"/>
<circle cx="485.0" cy="477.9" r="2.9" fill="url(#sg)"/>
<circle cx="462.3" cy="478.0" r="3.2" fill="url(#sg)"/>
<circle cx="567.0" cy="478.0" r="3.4" fill="url(#st)"/>
<circle cx="476.7" cy="478.0" r="3.1" fill="url(#st)"/>
<circle cx="509.0" cy="478.0" r="3.0" fill="url(#sg)"/>
<circle cx="451.1" cy="478.2" r="3.0" fill="url(#sg)"/>
<circle cx="364.9" cy="478.5" r="2.9" fill="url(#st)"/>
<circle cx="415.4" cy="478.8" r="2.9" fill="url(#st)"/>
<circle cx="393.4" cy="478.9" r="2.9" fill="url(#st)"/>
<circle cx="504.6" cy="478.9" r="3.3" fill="url(#sg)"/>
<circle cx="370.9" cy="479.0" r="2.8" fill="url(#st)"/>
<circle cx="408.7" cy="479.3" r="3.0" fill="url(#st)"/>
<circle cx="455.5" cy="479.4" r="3.0" fill="url(#sg)"/>
<circle cx="355.1" cy="479.4" r="2.8" fill="url(#st)"/>
<circle cx="441.9" cy="479.5" r="3.1" fill="url(#sg)"/>
<circle cx="432.6" cy="479.7" r="2.8" fill="url(#st)"/>
<circle cx="521.0" cy="479.7" r="2.9" fill="url(#st)"/>
<circle cx="493.3" cy="479.8" r="2.9" fill="url(#sn)"/>
<circle cx="375.6" cy="479.8" r="2.6" fill="url(#st)"/>
<circle cx="513.1" cy="479.8" r="2.8" fill="url(#sg)"/>
<circle cx="419.1" cy="480.2" r="3.0" fill="url(#st)"/>
<circle cx="525.3" cy="480.2" r="3.0" fill="url(#sb)"/>
<circle cx="422.9" cy="480.3" r="2.7" fill="url(#st)"/>
<circle cx="387.3" cy="480.4" r="2.6" fill="url(#sn)"/>
<circle cx="553.0" cy="480.4" r="3.2" fill="url(#st)"/>
<circle cx="402.2" cy="480.6" r="2.7" fill="url(#st)"/>
<circle cx="471.4" cy="480.6" r="3.2" fill="url(#sg)"/>
<circle cx="465.4" cy="480.7" r="2.9" fill="url(#st)"/>
<circle cx="380.2" cy="480.7" r="2.7" fill="url(#st)"/>
<circle cx="446.6" cy="480.8" r="3.1" fill="url(#sg)"/>
<circle cx="532.7" cy="480.9" r="3.1" fill="url(#st)"/>
<circle cx="436.8" cy="481.1" r="2.9" fill="url(#st)"/>
<circle cx="500.2" cy="481.1" r="2.9" fill="url(#st)"/>
<circle cx="359.4" cy="481.1" r="2.6" fill="url(#st)"/>
<circle cx="398.0" cy="481.2" r="2.7" fill="url(#st)"/>
<circle cx="540.3" cy="481.2" r="3.2" fill="url(#sg)"/>
<circle cx="426.7" cy="481.4" r="2.9" fill="url(#st)"/>
<circle cx="560.0" cy="481.4" r="3.3" fill="url(#st)"/>
<circle cx="405.8" cy="481.5" r="2.9" fill="url(#st)"/>
<circle cx="479.7" cy="481.9" r="2.9" fill="url(#st)"/>
<circle cx="487.9" cy="482.1" r="3.2" fill="url(#sg)"/>
<circle cx="366.7" cy="482.1" r="2.8" fill="url(#st)"/>
<circle cx="569.6" cy="482.3" r="3.6" fill="url(#st)"/>
<circle cx="510.1" cy="482.5" r="3.2" fill="url(#sg)"/>
<circle cx="475.8" cy="482.5" r="2.9" fill="url(#st)"/>
<circle cx="430.2" cy="482.5" r="2.9" fill="url(#st)"/>
<circle cx="544.1" cy="483.0" r="3.0" fill="url(#st)"/>
<circle cx="549.6" cy="483.1" r="3.2" fill="url(#sn)"/>
<circle cx="496.6" cy="483.1" r="3.1" fill="url(#sg)"/>
<circle cx="416.9" cy="483.2" r="3.1" fill="url(#sn)"/>
<circle cx="453.6" cy="483.4" r="3.0" fill="url(#st)"/>
<circle cx="363.2" cy="483.5" r="2.6" fill="url(#st)"/>
<circle cx="372.1" cy="483.5" r="2.9" fill="url(#st)"/>
<circle cx="529.6" cy="483.6" r="3.2" fill="url(#st)"/>
<circle cx="389.5" cy="483.6" r="2.9" fill="url(#st)"/>
<circle cx="439.9" cy="483.7" r="2.9" fill="url(#st)"/>
<circle cx="565.5" cy="483.8" r="3.6" fill="url(#st)"/>
<circle cx="376.8" cy="483.8" r="2.7" fill="url(#st)"/>
<circle cx="382.5" cy="483.9" r="2.6" fill="url(#st)"/>
<circle cx="518.3" cy="484.0" r="3.2" fill="url(#sg)"/>
<circle cx="556.2" cy="484.0" r="3.5" fill="url(#sb)"/>
<circle cx="449.2" cy="484.1" r="2.9" fill="url(#st)"/>
<circle cx="483.9" cy="484.2" r="2.9" fill="url(#sn)"/>
<circle cx="408.6" cy="484.3" r="2.8" fill="url(#st)"/>
<circle cx="491.6" cy="484.5" r="3.1" fill="url(#st)"/>
<circle cx="505.5" cy="484.5" r="3.0" fill="url(#st)"/>
<circle cx="458.5" cy="484.6" r="2.7" fill="url(#sg)"/>
<circle cx="536.8" cy="484.7" r="3.2" fill="url(#sg)"/>
<circle cx="400.9" cy="484.7" r="2.8" fill="url(#st)"/>
<circle cx="354.9" cy="484.8" r="2.6" fill="url(#st)"/>
<circle cx="412.1" cy="484.8" r="3.0" fill="url(#st)"/>
<circle cx="462.5" cy="485.1" r="2.7" fill="url(#sg)"/>
<circle cx="422.7" cy="485.2" r="2.8" fill="url(#st)"/>
<circle cx="405.1" cy="485.3" r="3.0" fill="url(#st)"/>
<circle cx="524.4" cy="485.4" r="3.2" fill="url(#st)"/>
<circle cx="472.7" cy="485.6" r="2.9" fill="url(#st)"/>
<circle cx="443.5" cy="485.6" r="3.1" fill="url(#st)"/>
<circle cx="479.5" cy="485.7" r="3.0" fill="url(#sg)"/>
<circle cx="394.8" cy="485.7" r="2.7" fill="url(#st)"/>
<circle cx="466.4" cy="485.9" r="2.8" fill="url(#sn)"/>
<circle cx="499.2" cy="485.9" r="3.1" fill="url(#sn)"/>
<circle cx="515.1" cy="486.2" r="3.1" fill="url(#sn)"/>
<circle cx="427.0" cy="486.3" r="3.0" fill="url(#st)"/>
<circle cx="488.1" cy="486.3" r="3.1" fill="url(#sg)"/>
<circle cx="509.7" cy="486.4" r="3.2" fill="url(#st)"/>
<circle cx="433.4" cy="486.6" r="2.9" fill="url(#st)"/>
<circle cx="437.3" cy="486.7" r="2.9" fill="url(#st)"/>
<circle cx="366.1" cy="486.7" r="2.9" fill="url(#st)"/>
<circle cx="540.8" cy="486.8" r="3.0" fill="url(#sg)"/>
<circle cx="549.9" cy="487.4" r="3.1" fill="url(#sg)"/>
<circle cx="358.2" cy="487.5" r="2.6" fill="url(#st)"/>
<circle cx="391.6" cy="487.5" r="2.7" fill="url(#st)"/>
<circle cx="531.3" cy="487.5" r="2.9" fill="url(#st)"/>
<circle cx="476.0" cy="487.5" r="3.1" fill="url(#st)"/>
<circle cx="452.1" cy="487.6" r="2.7" fill="url(#st)"/>
<circle cx="494.7" cy="487.6" r="2.9" fill="url(#sn)"/>
<circle cx="446.4" cy="487.7" r="2.8" fill="url(#st)"/>
<circle cx="545.6" cy="487.8" r="3.0" fill="url(#st)"/>
<circle cx="554.3" cy="487.9" r="3.1" fill="url(#sg)"/>
<circle cx="370.0" cy="487.9" r="2.6" fill="url(#st)"/>
<circle cx="417.0" cy="487.9" r="2.8" fill="url(#st)"/>
<circle cx="506.2" cy="488.2" r="3.2" fill="url(#sg)"/>
<circle cx="374.7" cy="488.4" r="2.5" fill="url(#st)"/>
<circle cx="384.7" cy="488.4" r="2.5" fill="url(#st)"/>
<circle cx="502.1" cy="488.6" r="2.9" fill="url(#st)"/>
<circle cx="380.3" cy="489.0" r="2.8" fill="url(#st)"/>
<circle cx="482.4" cy="489.0" r="2.7" fill="url(#sn)"/>
<circle cx="470.2" cy="489.2" r="3.1" fill="url(#st)"/>
<circle cx="395.4" cy="489.2" r="2.6" fill="url(#st)"/>
<circle cx="399.5" cy="489.2" r="2.8" fill="url(#st)"/>
<circle cx="424.5" cy="489.4" r="3.0" fill="url(#st)"/>
<circle cx="352.7" cy="489.5" r="2.8" fill="url(#st)"/>
<circle cx="559.5" cy="489.6" r="2.9" fill="url(#sg)"/>
<circle cx="526.6" cy="489.7" r="3.2" fill="url(#sn)"/>
<circle cx="405.0" cy="489.7" r="2.9" fill="url(#st)"/>
<circle cx="409.1" cy="489.7" r="3.0" fill="url(#st)"/>
<circle cx="563.6" cy="489.8" r="2.9" fill="url(#sg)"/>
<circle cx="441.6" cy="489.8" r="3.1" fill="url(#st)"/>
<circle cx="435.5" cy="489.9" r="2.8" fill="url(#st)"/>
<circle cx="413.5" cy="490.2" r="2.8" fill="url(#st)"/>
<circle cx="458.4" cy="490.2" r="2.9" fill="url(#st)"/>
<circle cx="513.6" cy="490.3" r="2.7" fill="url(#st)"/>
<circle cx="521.0" cy="490.3" r="3.0" fill="url(#sg)"/>
<circle cx="362.0" cy="490.3" r="2.6" fill="url(#st)"/>
<circle cx="497.8" cy="490.4" r="2.8" fill="url(#sg)"/>
<circle cx="536.1" cy="490.5" r="2.8" fill="url(#st)"/>
<circle cx="367.7" cy="490.6" r="2.8" fill="url(#st)"/>
<circle cx="465.2" cy="490.9" r="3.0" fill="url(#st)"/>
<circle cx="490.6" cy="491.1" r="3.1" fill="url(#st)"/>
<circle cx="478.4" cy="491.1" r="3.1" fill="url(#st)"/>
<circle cx="517.3" cy="491.2" r="3.0" fill="url(#sg)"/>
<circle cx="508.9" cy="491.3" r="2.7" fill="url(#sg)"/>
<circle cx="550.2" cy="491.5" r="2.8" fill="url(#sg)"/>
<circle cx="417.8" cy="491.6" r="3.0" fill="url(#st)"/>
<circle cx="387.1" cy="491.6" r="2.7" fill="url(#st)"/>
<circle cx="356.6" cy="491.7" r="2.8" fill="url(#st)"/>
<circle cx="473.9" cy="491.8" r="2.8" fill="url(#st)"/>
<circle cx="430.2" cy="492.1" r="3.0" fill="url(#st)"/>
<circle cx="461.5" cy="492.1" r="2.7" fill="url(#st)"/>
<circle cx="454.6" cy="492.1" r="2.8" fill="url(#st)"/>
<circle cx="539.9" cy="492.2" r="2.9" fill="url(#sg)"/>
<circle cx="554.8" cy="492.2" r="3.2" fill="url(#st)"/>
<circle cx="484.1" cy="492.3" r="3.1" fill="url(#st)"/>
<circle cx="503.9" cy="492.4" r="3.0" fill="url(#st)"/>
<circle cx="544.2" cy="492.6" r="3.1" fill="url(#sg)"/>
<circle cx="426.3" cy="492.8" r="2.7" fill="url(#st)"/>
<circle cx="395.5" cy="492.8" r="2.8" fill="url(#sn)"/>
<circle cx="400.3" cy="492.9" r="2.6" fill="url(#st)"/>
<circle cx="382.1" cy="492.9" r="2.8" fill="url(#st)"/>
<circle cx="411.6" cy="493.1" r="2.7" fill="url(#st)"/>
<circle cx="450.9" cy="493.2" r="2.6" fill="url(#st)"/>
<circle cx="528.2" cy="493.2" r="2.8" fill="url(#st)"/>
<circle cx="422.6" cy="493.2" r="2.7" fill="url(#st)"/>
<circle cx="359.6" cy="493.3" r="2.8" fill="url(#st)"/>
<circle cx="470.0" cy="493.3" r="2.7" fill="url(#sn)"/>
<circle cx="438.4" cy="493.5" r="2.8" fill="url(#st)"/>
<circle cx="445.4" cy="493.5" r="3.0" fill="url(#st)"/>
<circle cx="376.6" cy="493.6" r="2.9" fill="url(#st)"/>
<circle cx="365.5" cy="493.6" r="2.7" fill="url(#st)"/>
<circle cx="403.7" cy="493.6" r="2.5" fill="url(#st)"/>
<circle cx="372.1" cy="493.8" r="2.8" fill="url(#st)"/>
<circle cx="434.6" cy="494.1" r="2.7" fill="url(#st)"/>
<circle cx="415.2" cy="494.2" r="2.8" fill="url(#sb)"/>
<circle cx="391.2" cy="494.2" r="2.5" fill="url(#st)"/>
<circle cx="513.5" cy="494.3" r="2.8" fill="url(#sg)"/>
<circle cx="495.9" cy="494.4" r="2.9" fill="url(#st)"/>
<circle cx="487.8" cy="494.5" r="2.9" fill="url(#st)"/>
<circle cx="531.9" cy="494.5" r="3.2" fill="url(#sg)"/>
<circle cx="560.9" cy="494.6" r="3.1" fill="url(#sg)"/>
<circle cx="476.5" cy="494.7" r="2.8" fill="url(#st)"/>
<circle cx="354.8" cy="494.9" r="2.5" fill="url(#st)"/>
<circle cx="350.0" cy="494.9" r="2.5" fill="url(#st)"/>
<circle cx="536.9" cy="494.9" r="3.0" fill="url(#st)"/>
<circle cx="481.0" cy="495.0" r="2.8" fill="url(#st)"/>
<circle cx="549.2" cy="495.2" r="3.2" fill="url(#st)"/>
<circle cx="457.3" cy="495.4" r="2.9" fill="url(#st)"/>
<circle cx="385.2" cy="495.4" r="2.8" fill="url(#st)"/>
<circle cx="407.8" cy="495.7" r="2.6" fill="url(#st)"/>
<circle cx="461.6" cy="495.9" r="3.1" fill="url(#st)"/>
<circle cx="501.3" cy="496.0" r="2.9" fill="url(#st)"/>
<circle cx="522.9" cy="496.0" r="3.0" fill="url(#st)"/>
<circle cx="506.6" cy="496.2" r="2.8" fill="url(#sn)"/>
<circle cx="368.8" cy="496.3" r="2.7" fill="url(#st)"/>
<circle cx="466.2" cy="496.3" r="2.9" fill="url(#sb)"/>
<circle cx="418.5" cy="496.7" r="2.7" fill="url(#st)"/>
<circle cx="401.6" cy="496.8" r="2.7" fill="url(#st)"/>
<circle cx="450.0" cy="496.9" r="2.8" fill="url(#st)"/>
<circle cx="453.7" cy="496.9" r="2.7" fill="url(#st)"/>
<circle cx="393.7" cy="497.1" r="2.8" fill="url(#st)"/>
<circle cx="372.2" cy="497.3" r="2.7" fill="url(#st)"/>
<circle cx="557.1" cy="497.3" r="2.9" fill="url(#sg)"/>
<circle cx="471.9" cy="497.3" r="2.9" fill="url(#sn)"/>
<circle cx="397.8" cy="497.4" r="2.7" fill="url(#st)"/>
<circle cx="515.7" cy="497.5" r="3.0" fill="url(#st)"/>
<circle cx="440.3" cy="497.5" r="2.7" fill="url(#st)"/>
<circle cx="491.7" cy="497.6" r="3.0" fill="url(#st)"/>
<circle cx="423.1" cy="497.6" r="2.8" fill="url(#st)"/>
<circle cx="390.1" cy="497.7" r="2.7" fill="url(#st)"/>
<circle cx="378.9" cy="497.8" r="2.7" fill="url(#st)"/>
<circle cx="358.6" cy="498.2" r="2.6" fill="url(#st)"/>
<circle cx="497.3" cy="498.2" r="3.0" fill="url(#st)"/>
<circle cx="445.9" cy="498.3" r="3.0" fill="url(#st)"/>
<circle cx="412.2" cy="498.3" r="2.9" fill="url(#st)"/>
<circle cx="475.6" cy="498.3" r="2.9" fill="url(#st)"/>
<circle cx="544.8" cy="498.3" r="3.0" fill="url(#st)"/>
<circle cx="551.4" cy="498.4" r="3.0" fill="url(#sn)"/>
<circle cx="383.5" cy="498.6" r="2.8" fill="url(#st)"/>
<circle cx="487.0" cy="498.7" r="3.0" fill="url(#st)"/>
<circle cx="354.9" cy="498.7" r="2.8" fill="url(#st)"/>
<circle cx="481.4" cy="498.8" r="2.7" fill="url(#st)"/>
<circle cx="541.1" cy="498.8" r="2.9" fill="url(#sg)"/>
<circle cx="429.7" cy="498.8" r="2.7" fill="url(#st)"/>
<circle cx="363.5" cy="498.9" r="2.8" fill="url(#st)"/>
<circle cx="375.5" cy="498.9" r="2.7" fill="url(#st)"/>
<circle cx="463.3" cy="499.1" r="3.0" fill="url(#st)"/>
<circle cx="512.5" cy="499.3" r="2.7" fill="url(#sg)"/>
<circle cx="527.2" cy="499.4" r="2.8" fill="url(#sg)"/>
<circle cx="519.1" cy="499.5" r="2.9" fill="url(#sg)"/>
<circle cx="501.3" cy="499.6" r="2.8" fill="url(#st)"/>
<circle cx="405.7" cy="499.6" r="2.9" fill="url(#st)"/>
<circle cx="508.4" cy="499.6" r="2.7" fill="url(#st)"/>
<circle cx="534.6" cy="499.8" r="2.9" fill="url(#sg)"/>
<circle cx="436.3" cy="500.1" r="2.8" fill="url(#st)"/>
<circle cx="425.4" cy="500.5" r="2.7" fill="url(#sg)"/>
<circle cx="369.3" cy="500.7" r="2.7" fill="url(#st)"/>
<circle cx="504.9" cy="500.9" r="3.1" fill="url(#st)"/>
<circle cx="457.5" cy="500.9" r="2.9" fill="url(#st)"/>
<circle cx="396.1" cy="500.9" r="2.8" fill="url(#st)"/>
<circle cx="547.9" cy="500.9" r="2.8" fill="url(#sn)"/>
<circle cx="467.9" cy="501.0" r="2.8" fill="url(#st)"/>
<circle cx="493.5" cy="501.0" r="2.9" fill="url(#st)"/>
<circle cx="420.1" cy="501.3" r="2.7" fill="url(#st)"/>
<circle cx="365.8" cy="501.3" r="2.6" fill="url(#st)"/>
<circle cx="415.8" cy="501.6" r="2.7" fill="url(#sg)"/>
<circle cx="443.0" cy="501.8" r="2.8" fill="url(#st)"/>
<circle cx="400.7" cy="501.9" r="2.8" fill="url(#sg)"/>
<circle cx="522.8" cy="502.0" r="2.8" fill="url(#sn)"/>
<circle cx="358.5" cy="502.0" r="2.6" fill="url(#st)"/>
<circle cx="392.2" cy="502.0" r="2.5" fill="url(#sg)"/>
<circle cx="497.1" cy="502.1" r="2.8" fill="url(#st)"/>
<circle cx="377.2" cy="502.2" r="2.6" fill="url(#st)"/>
<circle cx="353.3" cy="502.2" r="2.6" fill="url(#st)"/>
<circle cx="388.0" cy="502.2" r="2.8" fill="url(#sg)"/>
<circle cx="428.4" cy="502.3" r="2.8" fill="url(#st)"/>
<circle cx="452.6" cy="502.4" r="2.8" fill="url(#st)"/>
<circle cx="461.1" cy="502.4" r="2.8" fill="url(#st)"/>
<circle cx="485.3" cy="502.5" r="2.7" fill="url(#st)"/>
<circle cx="514.2" cy="502.6" r="2.7" fill="url(#sg)"/>
<circle cx="537.2" cy="502.6" r="3.2" fill="url(#sg)"/>
<circle cx="447.9" cy="502.7" r="2.8" fill="url(#st)"/>
<circle cx="433.3" cy="502.8" r="2.8" fill="url(#st)"/>
<circle cx="471.5" cy="502.8" r="2.6" fill="url(#st)"/>
<circle cx="384.5" cy="503.1" r="2.6" fill="url(#st)"/>
<circle cx="478.5" cy="503.1" r="2.6" fill="url(#st)"/>
<circle cx="409.7" cy="503.6" r="2.9" fill="url(#st)"/>
<circle cx="518.2" cy="503.6" r="3.1" fill="url(#st)"/>
<circle cx="554.0" cy="503.7" r="3.1" fill="url(#sg)"/>
<circle cx="404.2" cy="503.7" r="2.5" fill="url(#st)"/>
<circle cx="436.7" cy="503.7" r="2.8" fill="url(#st)"/>
<circle cx="500.4" cy="503.8" r="2.7" fill="url(#st)"/>
<circle cx="490.8" cy="504.0" r="2.8" fill="url(#st)"/>
<circle cx="413.4" cy="504.4" r="2.9" fill="url(#st)"/>
<circle cx="531.1" cy="504.4" r="2.7" fill="url(#sg)"/>
<circle cx="504.8" cy="504.5" r="3.1" fill="url(#st)"/>
<circle cx="362.4" cy="504.6" r="2.8" fill="url(#st)"/>
<circle cx="543.1" cy="504.6" r="2.9" fill="url(#st)"/>
<circle cx="547.9" cy="505.1" r="3.1" fill="url(#st)"/>
<circle cx="373.8" cy="505.1" r="2.6" fill="url(#st)"/>
<circle cx="370.4" cy="505.2" r="2.8" fill="url(#sg)"/>
<circle cx="463.5" cy="505.3" r="2.6" fill="url(#st)"/>
<circle cx="474.2" cy="505.3" r="2.8" fill="url(#st)"/>
<circle cx="454.5" cy="505.4" r="2.9" fill="url(#st)"/>
<circle cx="440.8" cy="505.5" r="2.8" fill="url(#st)"/>
<circle cx="420.1" cy="505.7" r="2.6" fill="url(#st)"/>
<circle cx="379.1" cy="505.7" r="2.7" fill="url(#st)"/>
<circle cx="429.4" cy="505.7" r="2.7" fill="url(#st)"/>
<circle cx="509.6" cy="505.7" r="2.8" fill="url(#st)"/>
<circle cx="425.9" cy="505.7" r="2.9" fill="url(#sg)"/>
<circle cx="525.3" cy="505.8" r="3.1" fill="url(#st)"/>
<circle cx="350.0" cy="505.8" r="2.5" fill="url(#st)"/>
<circle cx="396.8" cy="505.9" r="2.7" fill="url(#st)"/>
<circle cx="480.6" cy="506.0" r="2.8" fill="url(#st)"/>
<circle cx="493.8" cy="506.1" r="2.7" fill="url(#st)"/>
<circle cx="536.2" cy="506.2" r="3.1" fill="url(#st)"/>
<circle cx="467.0" cy="506.3" r="2.7" fill="url(#st)"/>
<circle cx="357.1" cy="506.3" r="2.7" fill="url(#st)"/>
<circle cx="365.5" cy="506.3" r="2.5" fill="url(#st)"/>
<circle cx="407.8" cy="506.4" r="2.7" fill="url(#st)"/>
<circle cx="513.4" cy="506.5" r="3.0" fill="url(#st)"/>
<circle cx="447.7" cy="506.5" r="2.9" fill="url(#st)"/>
<circle cx="433.8" cy="506.5" r="2.8" fill="url(#st)"/>
<circle cx="416.0" cy="506.6" r="2.8" fill="url(#st)"/>
<circle cx="387.2" cy="506.6" r="2.6" fill="url(#st)"/>
<circle cx="393.4" cy="506.6" r="2.5" fill="url(#st)"/>
<circle cx="497.2" cy="507.1" r="2.7" fill="url(#st)"/>
<circle cx="444.1" cy="507.2" r="2.7" fill="url(#st)"/>
<circle cx="404.5" cy="507.5" r="2.8" fill="url(#st)"/>
<circle cx="484.8" cy="507.7" r="2.6" fill="url(#st)"/>
<circle cx="451.2" cy="507.7" r="2.9" fill="url(#st)"/>
<circle cx="361.1" cy="507.9" r="2.6" fill="url(#st)"/>
<circle cx="471.9" cy="508.0" r="2.6" fill="url(#st)"/>
<circle cx="550.9" cy="508.0" r="2.9" fill="url(#sg)"/>
<circle cx="400.7" cy="508.2" r="2.6" fill="url(#st)"/>
<circle cx="488.8" cy="508.4" r="2.9" fill="url(#st)"/>
<circle cx="459.6" cy="508.5" r="2.6" fill="url(#st)"/>
<circle cx="504.5" cy="508.6" r="2.8" fill="url(#st)"/>
<circle cx="384.2" cy="508.6" r="2.6" fill="url(#st)"/>
<circle cx="500.5" cy="508.8" r="3.0" fill="url(#st)"/>
<circle cx="367.8" cy="508.9" r="2.6" fill="url(#st)"/>
<circle cx="455.5" cy="508.9" r="2.8" fill="url(#st)"/>
<circle cx="431.4" cy="509.0" r="2.6" fill="url(#st)"/>
<circle cx="355.3" cy="509.1" r="2.5" fill="url(#st)"/>
<circle cx="532.1" cy="509.1" r="2.7" fill="url(#st)"/>
<circle cx="411.2" cy="509.1" r="2.7" fill="url(#sg)"/>
<circle cx="423.1" cy="509.2" r="2.8" fill="url(#st)"/>
<circle cx="475.1" cy="509.2" r="2.7" fill="url(#st)"/>
<circle cx="516.6" cy="509.5" r="2.9" fill="url(#st)"/>
<circle cx="540.1" cy="509.7" r="2.8" fill="url(#st)"/>
<circle cx="464.0" cy="509.8" r="2.7" fill="url(#st)"/>
<circle cx="351.7" cy="509.8" r="2.4" fill="url(#st)"/>
<circle cx="521.6" cy="509.9" r="3.0" fill="url(#st)"/>
<circle cx="419.8" cy="510.1" r="2.5" fill="url(#st)"/>
<circle cx="492.0" cy="510.2" r="2.9" fill="url(#st)"/>
<circle cx="395.2" cy="510.4" r="2.5" fill="url(#st)"/>
<circle cx="546.0" cy="510.4" r="3.0" fill="url(#st)"/>
<circle cx="442.6" cy="510.4" r="2.7" fill="url(#st)"/>
<circle cx="495.5" cy="510.5" r="2.9" fill="url(#st)"/>
<circle cx="391.2" cy="510.6" r="2.4" fill="url(#st)"/>
<circle cx="373.2" cy="510.7" r="2.5" fill="url(#st)"/>
<circle cx="376.9" cy="510.8" r="2.7" fill="url(#st)"/>
<circle cx="535.8" cy="510.8" r="2.7" fill="url(#st)"/>
<circle cx="402.9" cy="510.9" r="2.4" fill="url(#st)"/>
<circle cx="438.3" cy="510.9" r="2.5" fill="url(#st)"/>
<circle cx="483.8" cy="511.0" r="2.7" fill="url(#st)"/>
<circle cx="427.4" cy="511.2" r="2.6" fill="url(#st)"/>
<circle cx="446.0" cy="511.2" r="2.6" fill="url(#st)"/>
<circle cx="528.0" cy="511.3" r="2.8" fill="url(#st)"/>
<circle cx="416.4" cy="511.4" r="2.6" fill="url(#st)"/>
<circle cx="449.7" cy="511.5" r="2.8" fill="url(#st)"/>
<circle cx="468.2" cy="511.6" r="2.8" fill="url(#st)"/>
<circle cx="365.8" cy="511.6" r="2.6" fill="url(#st)"/>
<circle cx="408.6" cy="511.7" r="2.6" fill="url(#st)"/>
<circle cx="433.7" cy="511.7" r="2.7" fill="url(#st)"/>
<circle cx="381.3" cy="511.8" r="2.7" fill="url(#st)"/>
<circle cx="472.2" cy="512.4" r="2.7" fill="url(#st)"/>
<circle cx="510.3" cy="512.5" r="2.8" fill="url(#st)"/>
<circle cx="502.4" cy="512.6" r="2.7" fill="url(#st)"/>
<circle cx="513.9" cy="512.6" r="2.7" fill="url(#st)"/>
<circle cx="506.1" cy="512.8" r="2.6" fill="url(#st)"/>
<circle cx="455.5" cy="512.8" r="2.9" fill="url(#st)"/>
<circle cx="480.6" cy="513.0" r="2.9" fill="url(#st)"/>
<circle cx="422.5" cy="513.0" r="2.6" fill="url(#st)"/>
<circle cx="498.2" cy="513.1" r="2.7" fill="url(#st)"/>
<circle cx="385.6" cy="513.1" r="2.8" fill="url(#st)"/>
<circle cx="393.7" cy="513.4" r="2.5" fill="url(#st)"/>
<circle cx="486.7" cy="513.4" r="2.6" fill="url(#st)"/>
<circle cx="521.0" cy="513.5" r="2.8" fill="url(#st)"/>
<circle cx="476.3" cy="513.5" r="2.6" fill="url(#st)"/>
<circle cx="359.8" cy="513.6" r="2.7" fill="url(#st)"/>
<circle cx="389.1" cy="513.6" r="2.4" fill="url(#st)"/>
<circle cx="349.7" cy="513.6" r="2.4" fill="url(#sw)"/>
<circle cx="368.3" cy="513.7" r="2.4" fill="url(#st)"/>
<circle cx="353.7" cy="513.8" r="2.6" fill="url(#st)"/>
<circle cx="531.0" cy="513.8" r="3.1" fill="url(#st)"/>
<circle cx="397.2" cy="513.9" r="2.7" fill="url(#st)"/>
<circle cx="464.5" cy="514.3" r="2.9" fill="url(#st)"/>
<circle cx="535.2" cy="514.5" r="2.9" fill="url(#st)"/>
<circle cx="404.9" cy="514.5" r="2.5" fill="url(#st)"/>
<circle cx="491.0" cy="514.5" r="2.7" fill="url(#st)"/>
<circle cx="364.0" cy="514.6" r="2.4" fill="url(#st)"/>
<circle cx="401.3" cy="514.6" r="2.5" fill="url(#st)"/>
<circle cx="447.7" cy="514.7" r="2.8" fill="url(#st)"/>
<circle cx="414.5" cy="514.8" r="2.4" fill="url(#st)"/>
<circle cx="460.7" cy="514.8" r="2.5" fill="url(#sp)"/>
<circle cx="376.9" cy="514.9" r="2.6" fill="url(#st)"/>
<circle cx="433.8" cy="515.4" r="2.5" fill="url(#st)"/>
<circle cx="527.0" cy="515.4" r="2.9" fill="url(#st)"/>
<circle cx="541.7" cy="515.5" r="2.9" fill="url(#st)"/>
<circle cx="427.7" cy="515.7" r="2.7" fill="url(#st)"/>
<circle cx="408.2" cy="515.8" r="2.5" fill="url(#st)"/>
<circle cx="504.0" cy="515.8" r="2.9" fill="url(#st)"/>
<circle cx="438.7" cy="516.0" r="2.9" fill="url(#st)"/>
<circle cx="470.1" cy="516.1" r="2.9" fill="url(#st)"/>
<circle cx="420.6" cy="516.3" r="2.8" fill="url(#st)"/>
<circle cx="391.5" cy="516.3" r="2.6" fill="url(#st)"/>
<circle cx="451.1" cy="516.3" r="2.8" fill="url(#sp)"/>
<circle cx="443.4" cy="516.4" r="2.6" fill="url(#st)"/>
<circle cx="370.7" cy="516.6" r="2.7" fill="url(#sg)"/>
<circle cx="498.1" cy="516.6" r="2.9" fill="url(#st)"/>
<circle cx="477.7" cy="516.7" r="2.9" fill="url(#st)"/>
<circle cx="486.1" cy="516.8" r="2.7" fill="url(#st)"/>
<circle cx="481.5" cy="516.8" r="2.9" fill="url(#st)"/>
<circle cx="515.0" cy="516.8" r="2.8" fill="url(#st)"/>
<circle cx="411.9" cy="516.9" r="2.7" fill="url(#st)"/>
<circle cx="367.0" cy="517.0" r="2.6" fill="url(#st)"/>
<circle cx="381.8" cy="517.1" r="2.8" fill="url(#st)"/>
<circle cx="518.7" cy="517.2" r="2.9" fill="url(#st)"/>
<circle cx="397.5" cy="517.2" r="2.4" fill="url(#st)"/>
<circle cx="360.3" cy="517.3" r="2.5" fill="url(#st)"/>
<circle cx="466.1" cy="517.5" r="2.6" fill="url(#st)"/>
<circle cx="509.2" cy="517.9" r="3.0" fill="url(#st)"/>
<circle cx="534.7" cy="518.0" r="2.7" fill="url(#st)"/>
<circle cx="493.9" cy="518.0" r="2.6" fill="url(#st)"/>
<circle cx="394.0" cy="518.3" r="2.8" fill="url(#st)"/>
<circle cx="459.0" cy="518.5" r="2.6" fill="url(#sp)"/>
<circle cx="530.3" cy="518.6" r="3.0" fill="url(#st)"/>
<circle cx="384.7" cy="518.7" r="2.7" fill="url(#st)"/>
<circle cx="455.6" cy="518.8" r="2.8" fill="url(#sp)"/>
<circle cx="357.2" cy="518.8" r="2.6" fill="url(#st)"/>
<circle cx="501.2" cy="518.9" r="2.7" fill="url(#st)"/>
<circle cx="363.3" cy="518.9" r="2.7" fill="url(#st)"/>
<circle cx="376.2" cy="518.9" r="2.5" fill="url(#st)"/>
<circle cx="446.8" cy="519.2" r="2.7" fill="url(#sp)"/>
<circle cx="417.8" cy="519.2" r="2.6" fill="url(#st)"/>
<circle cx="490.2" cy="519.3" r="2.5" fill="url(#st)"/>
<circle cx="474.8" cy="519.4" r="2.6" fill="url(#st)"/>
<circle cx="431.2" cy="519.4" r="2.7" fill="url(#st)"/>
<circle cx="427.2" cy="519.5" r="2.7" fill="url(#st)"/>
<circle cx="526.8" cy="519.6" r="2.8" fill="url(#sb)"/>
<circle cx="539.1" cy="519.7" r="3.1" fill="url(#st)"/>
<circle cx="422.4" cy="519.7" r="2.8" fill="url(#st)"/>
<circle cx="399.7" cy="519.7" r="2.7" fill="url(#sg)"/>
<circle cx="437.1" cy="519.8" r="2.4" fill="url(#st)"/>
<circle cx="408.5" cy="520.0" r="2.6" fill="url(#st)"/>
<circle cx="403.9" cy="520.0" r="2.5" fill="url(#sg)"/>
<circle cx="390.9" cy="520.0" r="2.6" fill="url(#st)"/>
<circle cx="523.0" cy="520.1" r="2.9" fill="url(#st)"/>
<circle cx="414.5" cy="520.2" r="2.5" fill="url(#st)"/>
<circle cx="512.5" cy="520.3" r="2.7" fill="url(#st)"/>
<circle cx="354.2" cy="520.3" r="2.3" fill="url(#st)"/>
<circle cx="381.5" cy="520.4" r="2.7" fill="url(#st)"/>
<circle cx="350.9" cy="520.6" r="2.4" fill="url(#st)"/>
<circle cx="343.0" cy="520.8" r="2.6" fill="url(#st)"/>
<circle cx="372.7" cy="521.0" r="2.6" fill="url(#sg)"/>
<circle cx="519.5" cy="521.1" r="2.7" fill="url(#st)"/>
<circle cx="453.0" cy="521.1" r="2.7" fill="url(#sp)"/>
<circle cx="479.7" cy="521.2" r="2.7" fill="url(#st)"/>
<circle cx="494.7" cy="521.4" r="2.9" fill="url(#st)"/>
<circle cx="442.3" cy="521.8" r="2.6" fill="url(#st)"/>
<circle cx="361.9" cy="521.8" r="2.7" fill="url(#st)"/>
<circle cx="366.2" cy="521.9" r="2.4" fill="url(#st)"/>
<circle cx="385.3" cy="521.9" r="2.5" fill="url(#st)"/>
<circle cx="543.7" cy="522.0" r="2.9" fill="url(#st)"/>
<circle cx="395.4" cy="522.1" r="2.4" fill="url(#st)"/>
<circle cx="534.1" cy="522.1" r="2.7" fill="url(#st)"/>
<circle cx="463.3" cy="522.1" r="2.5" fill="url(#st)"/>
<circle cx="369.8" cy="522.2" r="2.5" fill="url(#sb)"/>
<circle cx="377.5" cy="522.2" r="2.6" fill="url(#st)"/>
<circle cx="505.1" cy="522.4" r="2.9" fill="url(#st)"/>
<circle cx="515.9" cy="522.4" r="2.9" fill="url(#st)"/>
<circle cx="471.5" cy="522.4" r="2.8" fill="url(#st)"/>
<circle cx="429.0" cy="522.4" r="2.7" fill="url(#st)"/>
<circle cx="467.7" cy="522.5" r="2.5" fill="url(#st)"/>
<circle cx="411.8" cy="522.5" r="2.4" fill="url(#st)"/>
<circle cx="439.1" cy="522.5" r="2.4" fill="url(#st)"/>
<circle cx="459.7" cy="522.6" r="2.6" fill="url(#st)"/>
<circle cx="388.9" cy="522.8" r="2.4" fill="url(#st)"/>
<circle cx="432.9" cy="522.9" r="2.7" fill="url(#st)"/>
<circle cx="510.3" cy="522.9" r="2.8" fill="url(#st)"/>
<circle cx="485.3" cy="523.0" r="2.7" fill="url(#st)"/>
<circle cx="500.3" cy="523.1" r="2.7" fill="url(#st)"/>
<circle cx="446.3" cy="523.1" r="2.7" fill="url(#sp)"/>
<circle cx="346.8" cy="523.2" r="2.3" fill="url(#st)"/>
<circle cx="456.1" cy="523.4" r="2.6" fill="url(#st)"/>
<circle cx="415.4" cy="523.4" r="2.4" fill="url(#st)"/>
<circle cx="403.2" cy="523.6" r="2.6" fill="url(#st)"/>
<circle cx="353.6" cy="523.8" r="2.6" fill="url(#st)"/>
<circle cx="424.5" cy="524.0" r="2.6" fill="url(#sg)"/>
<circle cx="392.1" cy="524.0" r="2.7" fill="url(#st)"/>
<circle cx="358.4" cy="524.0" r="2.3" fill="url(#st)"/>
<circle cx="492.5" cy="524.0" r="2.6" fill="url(#st)"/>
<circle cx="450.5" cy="524.1" r="2.7" fill="url(#st)"/>
<circle cx="527.9" cy="524.4" r="2.7" fill="url(#st)"/>
<circle cx="406.6" cy="524.7" r="2.4" fill="url(#st)"/>
<circle cx="482.4" cy="524.9" r="2.7" fill="url(#st)"/>
<circle cx="497.4" cy="525.0" r="2.6" fill="url(#st)"/>
<circle cx="540.7" cy="525.0" r="2.7" fill="url(#st)"/>
<circle cx="419.8" cy="525.1" r="2.4" fill="url(#st)"/>
<circle cx="361.5" cy="525.2" r="2.6" fill="url(#st)"/>
<circle cx="437.1" cy="525.3" r="2.7" fill="url(#st)"/>
<circle cx="343.0" cy="525.4" r="2.5" fill="url(#st)"/>
<circle cx="382.0" cy="525.4" r="2.6" fill="url(#st)"/>
<circle cx="399.8" cy="525.4" r="2.6" fill="url(#st)"/>
<circle cx="430.4" cy="525.5" r="2.8" fill="url(#st)"/>
<circle cx="386.5" cy="525.5" r="2.6" fill="url(#st)"/>
<circle cx="520.6" cy="525.5" r="2.6" fill="url(#sn)"/>
<circle cx="475.9" cy="525.6" r="2.7" fill="url(#st)"/>
<circle cx="376.6" cy="525.8" r="2.6" fill="url(#st)"/>
<circle cx="524.7" cy="525.8" r="2.6" fill="url(#sb)"/>
<circle cx="372.9" cy="525.8" r="2.3" fill="url(#st)"/>
<circle cx="508.6" cy="526.0" r="2.7" fill="url(#st)"/>
<circle cx="467.6" cy="526.1" r="2.6" fill="url(#st)"/>
<circle cx="472.5" cy="526.1" r="2.6" fill="url(#st)"/>
<circle cx="441.4" cy="526.2" r="2.6" fill="url(#sp)"/>
<circle cx="537.2" cy="526.4" r="2.9" fill="url(#st)"/>
<circle cx="516.6" cy="526.5" r="2.8" fill="url(#st)"/>
<circle cx="366.4" cy="526.6" r="2.3" fill="url(#st)"/>
<circle cx="460.3" cy="526.6" r="2.7" fill="url(#st)"/>
<circle cx="489.5" cy="526.7" r="2.8" fill="url(#st)"/>
<circle cx="389.7" cy="526.8" r="2.3" fill="url(#st)"/>
<circle cx="395.7" cy="526.8" r="2.6" fill="url(#st)"/>
<circle cx="444.7" cy="527.0" r="2.8" fill="url(#sp)"/>
<circle cx="502.4" cy="527.0" r="2.5" fill="url(#st)"/>
<circle cx="404.2" cy="527.1" r="2.6" fill="url(#st)"/>
<circle cx="350.4" cy="527.1" r="2.5" fill="url(#st)"/>
<circle cx="423.3" cy="527.1" r="2.7" fill="url(#st)"/>
<circle cx="456.2" cy="527.2" r="2.5" fill="url(#st)"/>
<circle cx="427.0" cy="527.4" r="2.8" fill="url(#st)"/>
<circle cx="464.3" cy="527.5" r="2.6" fill="url(#st)"/>
<circle cx="480.4" cy="527.6" r="2.9" fill="url(#st)"/>
<circle cx="528.6" cy="527.8" r="2.7" fill="url(#st)"/>
<circle cx="450.6" cy="527.8" r="2.4" fill="url(#st)"/>
<circle cx="542.9" cy="527.9" r="2.8" fill="url(#st)"/>
<circle cx="410.9" cy="528.1" r="2.6" fill="url(#st)"/>
<circle cx="483.9" cy="528.2" r="2.9" fill="url(#st)"/>
<circle cx="433.2" cy="528.4" r="2.6" fill="url(#st)"/>
<circle cx="513.3" cy="528.4" r="2.7" fill="url(#st)"/>
<circle cx="369.8" cy="528.8" r="2.4" fill="url(#st)"/>
<circle cx="356.6" cy="528.8" r="2.5" fill="url(#st)"/>
<circle cx="407.7" cy="528.9" r="2.6" fill="url(#sg)"/>
<circle cx="436.5" cy="529.2" r="2.4" fill="url(#st)"/>
<circle cx="418.3" cy="529.2" r="2.7" fill="url(#st)"/>
<circle cx="414.7" cy="529.3" r="2.4" fill="url(#st)"/>
<circle cx="384.1" cy="529.3" r="2.6" fill="url(#st)"/>
<circle cx="364.9" cy="529.4" r="2.6" fill="url(#st)"/>
<circle cx="440.7" cy="529.4" r="2.6" fill="url(#st)"/>
<circle cx="380.6" cy="529.4" r="2.5" fill="url(#sg)"/>
<circle cx="532.0" cy="529.6" r="2.7" fill="url(#st)"/>
<circle cx="507.4" cy="529.6" r="2.9" fill="url(#st)"/>
<circle cx="496.2" cy="529.6" r="2.9" fill="url(#st)"/>
<circle cx="470.5" cy="529.7" r="2.6" fill="url(#st)"/>
<circle cx="518.9" cy="529.8" r="2.9" fill="url(#st)"/>
<circle cx="524.0" cy="529.8" r="2.9" fill="url(#st)"/>
<circle cx="422.0" cy="530.3" r="2.7" fill="url(#sg)"/>
<circle cx="536.9" cy="530.3" r="2.7" fill="url(#st)"/>
<circle cx="377.5" cy="530.3" r="2.3" fill="url(#st)"/>
<circle cx="461.3" cy="530.4" r="2.7" fill="url(#sg)"/>
<circle cx="401.1" cy="530.4" r="2.6" fill="url(#st)"/>
<circle cx="475.4" cy="530.5" r="2.7" fill="url(#sg)"/>
<circle cx="426.3" cy="530.6" r="2.7" fill="url(#st)"/>
<circle cx="394.5" cy="530.6" r="2.4" fill="url(#st)"/>
<circle cx="492.9" cy="530.9" r="2.5" fill="url(#st)"/>
<circle cx="349.5" cy="531.1" r="2.3" fill="url(#st)"/>
<circle cx="362.2" cy="531.1" r="2.4" fill="url(#st)"/>
<circle cx="515.4" cy="531.3" r="2.9" fill="url(#st)"/>
<circle cx="455.8" cy="531.3" r="2.6" fill="url(#st)"/>
<circle cx="373.6" cy="531.3" r="2.4" fill="url(#st)"/>
<circle cx="398.0" cy="531.3" r="2.3" fill="url(#st)"/>
<circle cx="465.5" cy="531.3" r="2.8" fill="url(#st)"/>
<circle cx="485.1" cy="531.4" r="2.7" fill="url(#st)"/>
<circle cx="386.7" cy="531.6" r="2.6" fill="url(#st)"/>
<circle cx="541.0" cy="531.7" r="2.7" fill="url(#st)"/>
<circle cx="355.0" cy="531.7" r="2.5" fill="url(#st)"/>
<circle cx="391.3" cy="531.8" r="2.6" fill="url(#sg)"/>
<circle cx="406.3" cy="532.0" r="2.4" fill="url(#st)"/>
<circle cx="358.0" cy="532.2" r="2.4" fill="url(#st)"/>
<circle cx="481.5" cy="532.3" r="2.7" fill="url(#st)"/>
<circle cx="528.0" cy="532.4" r="2.6" fill="url(#st)"/>
<circle cx="438.1" cy="532.4" r="2.6" fill="url(#st)"/>
<circle cx="344.1" cy="532.4" r="2.4" fill="url(#st)"/>
<circle cx="488.9" cy="532.7" r="2.6" fill="url(#st)"/>
<circle cx="369.3" cy="532.7" r="2.4" fill="url(#st)"/>
<circle cx="448.6" cy="532.7" r="2.6" fill="url(#st)"/>
<circle cx="497.8" cy="532.7" r="2.8" fill="url(#st)"/>
<circle cx="445.2" cy="532.8" r="2.7" fill="url(#st)"/>
<circle cx="380.3" cy="532.8" r="2.5" fill="url(#st)"/>
<circle cx="502.5" cy="532.8" r="2.6" fill="url(#st)"/>
<circle cx="522.6" cy="533.1" r="2.6" fill="url(#st)"/>
<circle cx="452.7" cy="533.2" r="2.7" fill="url(#sg)"/>
<circle cx="509.6" cy="533.3" r="2.6" fill="url(#st)"/>
<circle cx="412.2" cy="533.4" r="2.5" fill="url(#st)"/>
<circle cx="416.0" cy="533.5" r="2.7" fill="url(#st)"/>
<circle cx="421.9" cy="533.7" r="2.4" fill="url(#st)"/>
<circle cx="442.1" cy="533.8" r="2.6" fill="url(#st)"/>
<circle cx="431.7" cy="533.8" r="2.7" fill="url(#st)"/>
<circle cx="363.8" cy="533.9" r="2.3" fill="url(#st)"/>
<circle cx="494.4" cy="533.9" r="2.5" fill="url(#st)"/>
<circle cx="513.3" cy="533.9" r="2.6" fill="url(#sn)"/>
<circle cx="534.6" cy="534.0" r="2.7" fill="url(#st)"/>
<circle cx="463.0" cy="534.2" r="2.6" fill="url(#sg)"/>
<circle cx="393.9" cy="534.2" r="2.5" fill="url(#st)"/>
<circle cx="427.9" cy="534.5" r="2.6" fill="url(#st)"/>
<circle cx="457.7" cy="534.5" r="2.7" fill="url(#st)"/>
<circle cx="486.2" cy="534.6" r="2.4" fill="url(#st)"/>
<circle cx="400.3" cy="534.6" r="2.3" fill="url(#st)"/>
<circle cx="383.1" cy="534.6" r="2.5" fill="url(#sn)"/>
<circle cx="516.7" cy="534.7" r="2.8" fill="url(#st)"/>
<circle cx="372.2" cy="534.8" r="2.6" fill="url(#st)"/>
<circle cx="470.5" cy="534.9" r="2.6" fill="url(#sg)"/>
<circle cx="505.6" cy="535.1" r="2.7" fill="url(#st)"/>
<circle cx="476.2" cy="535.1" r="2.7" fill="url(#sg)"/>
<circle cx="404.4" cy="535.1" r="2.4" fill="url(#st)"/>
<circle cx="354.1" cy="535.2" r="2.4" fill="url(#st)"/>
<circle cx="526.2" cy="535.4" r="2.7" fill="url(#st)"/>
<circle cx="389.5" cy="535.5" r="2.5" fill="url(#st)"/>
<circle cx="396.9" cy="535.6" r="2.4" fill="url(#st)"/>
<circle cx="482.5" cy="535.7" r="2.7" fill="url(#st)"/>
<circle cx="378.5" cy="535.9" r="2.5" fill="url(#st)"/>
<circle cx="408.5" cy="536.0" r="2.6" fill="url(#st)"/>
<circle cx="519.9" cy="536.0" r="2.7" fill="url(#st)"/>
<circle cx="449.2" cy="536.0" r="2.4" fill="url(#st)"/>
<circle cx="530.3" cy="536.1" r="2.7" fill="url(#st)"/>
<circle cx="375.4" cy="536.1" r="2.5" fill="url(#st)"/>
<circle cx="538.0" cy="536.2" r="2.7" fill="url(#st)"/>
<circle cx="479.2" cy="536.4" r="2.5" fill="url(#sg)"/>
<circle cx="366.1" cy="536.5" r="2.6" fill="url(#st)"/>
<circle cx="434.7" cy="536.5" r="2.4" fill="url(#st)"/>
<circle cx="412.4" cy="536.6" r="2.6" fill="url(#st)"/>
<circle cx="467.1" cy="536.6" r="2.6" fill="url(#st)"/>
<circle cx="422.4" cy="536.8" r="2.5" fill="url(#st)"/>
<circle cx="359.2" cy="536.8" r="2.5" fill="url(#st)"/>
<circle cx="473.2" cy="537.1" r="2.8" fill="url(#st)"/>
<circle cx="499.2" cy="537.4" r="2.6" fill="url(#st)"/>
<circle cx="370.1" cy="537.5" r="2.5" fill="url(#st)"/>
<circle cx="346.1" cy="537.5" r="2.5" fill="url(#st)"/>
<circle cx="461.2" cy="537.5" r="2.7" fill="url(#st)"/>
<circle cx="418.7" cy="537.7" r="2.5" fill="url(#st)"/>
<circle cx="442.5" cy="537.8" r="2.3" fill="url(#st)"/>
<circle cx="492.1" cy="538.2" r="2.5" fill="url(#st)"/>
<circle cx="425.7" cy="538.4" r="2.5" fill="url(#st)"/>
<circle cx="437.3" cy="538.4" r="2.7" fill="url(#st)"/>
<circle cx="504.0" cy="538.4" r="2.6" fill="url(#st)"/>
<circle cx="447.2" cy="538.6" r="2.4" fill="url(#st)"/>
<circle cx="495.5" cy="538.6" r="2.8" fill="url(#st)"/>
<circle cx="455.8" cy="538.7" r="2.6" fill="url(#st)"/>
<circle cx="381.2" cy="538.7" r="2.5" fill="url(#st)"/>
<circle cx="431.0" cy="538.9" r="2.4" fill="url(#st)"/>
<circle cx="487.6" cy="538.9" r="2.5" fill="url(#st)"/>
<circle cx="514.2" cy="539.0" r="2.6" fill="url(#st)"/>
<circle cx="510.6" cy="539.1" r="2.8" fill="url(#sp)"/>
<circle cx="450.9" cy="539.1" r="2.5" fill="url(#sg)"/>
<circle cx="349.7" cy="539.1" r="2.3" fill="url(#st)"/>
<circle cx="385.6" cy="539.3" r="2.3" fill="url(#st)"/>
<circle cx="372.4" cy="539.4" r="2.4" fill="url(#st)"/>
<circle cx="534.1" cy="539.5" r="2.8" fill="url(#st)"/>
<circle cx="403.0" cy="539.5" r="2.4" fill="url(#st)"/>
<circle cx="413.9" cy="539.5" r="2.5" fill="url(#st)"/>
<circle cx="480.6" cy="539.6" r="2.4" fill="url(#sg)"/>
<circle cx="362.4" cy="539.9" r="2.3" fill="url(#st)"/>
<circle cx="407.0" cy="539.9" r="2.3" fill="url(#st)"/>
<circle cx="524.0" cy="540.1" r="2.5" fill="url(#st)"/>
<circle cx="517.8" cy="540.1" r="2.7" fill="url(#st)"/>
<circle cx="527.4" cy="540.3" r="2.7" fill="url(#st)"/>
<circle cx="375.3" cy="540.3" r="2.5" fill="url(#st)"/>
<circle cx="477.3" cy="540.4" r="2.7" fill="url(#st)"/>
<circle cx="410.9" cy="540.4" r="2.3" fill="url(#st)"/>
<circle cx="393.7" cy="540.6" r="2.4" fill="url(#st)"/>
<circle cx="464.3" cy="540.8" r="2.7" fill="url(#st)"/>
<circle cx="428.3" cy="540.8" r="2.5" fill="url(#st)"/>
<circle cx="440.3" cy="540.8" r="2.3" fill="url(#st)"/>
<circle cx="538.8" cy="541.0" r="2.8" fill="url(#st)"/>
<circle cx="459.2" cy="541.0" r="2.7" fill="url(#st)"/>
<circle cx="507.9" cy="541.1" r="2.7" fill="url(#sp)"/>
<circle cx="398.7" cy="541.1" r="2.5" fill="url(#st)"/>
<circle cx="369.0" cy="541.1" r="2.4" fill="url(#st)"/>
<circle cx="470.6" cy="541.2" r="2.5" fill="url(#st)"/>
<circle cx="390.3" cy="541.2" r="2.4" fill="url(#st)"/>
<circle cx="500.8" cy="541.2" r="2.7" fill="url(#sp)"/>
<circle cx="382.9" cy="541.3" r="2.5" fill="url(#st)"/>
<circle cx="445.4" cy="541.6" r="2.7" fill="url(#st)"/>
<circle cx="359.1" cy="541.6" r="2.3" fill="url(#st)"/>
<circle cx="492.5" cy="541.7" r="2.5" fill="url(#st)"/>
<circle cx="531.2" cy="541.8" r="2.8" fill="url(#st)"/>
<circle cx="423.6" cy="541.8" r="2.6" fill="url(#st)"/>
<circle cx="420.0" cy="541.8" r="2.5" fill="url(#st)"/>
<circle cx="354.4" cy="541.9" r="2.5" fill="url(#st)"/>
<circle cx="504.7" cy="542.0" r="2.7" fill="url(#sp)"/>
<circle cx="379.1" cy="542.1" r="2.3" fill="url(#st)"/>
<circle cx="513.9" cy="542.3" r="2.7" fill="url(#st)"/>
<circle cx="401.8" cy="542.3" r="2.5" fill="url(#st)"/>
<circle cx="449.0" cy="542.4" r="2.6" fill="url(#sg)"/>
<circle cx="436.3" cy="542.5" r="2.5" fill="url(#st)"/>
<circle cx="431.7" cy="542.7" r="2.5" fill="url(#st)"/>
<circle cx="405.0" cy="542.9" r="2.5" fill="url(#st)"/>
<circle cx="456.0" cy="542.9" r="2.4" fill="url(#sg)"/>
<circle cx="372.0" cy="543.0" r="2.5" fill="url(#st)"/>
<circle cx="442.6" cy="543.1" r="2.4" fill="url(#st)"/>
<circle cx="485.5" cy="543.1" r="2.4" fill="url(#sg)"/>
<circle cx="520.7" cy="543.2" r="2.7" fill="url(#st)"/>
<circle cx="386.1" cy="543.3" r="2.3" fill="url(#st)"/>
<circle cx="479.4" cy="543.3" r="2.4" fill="url(#st)"/>
<circle cx="362.9" cy="543.4" r="2.3" fill="url(#st)"/>
<circle cx="395.9" cy="543.4" r="2.3" fill="url(#st)"/>
<circle cx="466.5" cy="543.5" r="2.6" fill="url(#st)"/>
<circle cx="413.8" cy="543.5" r="2.5" fill="url(#st)"/>
<circle cx="410.4" cy="543.5" r="2.3" fill="url(#st)"/>
<circle cx="366.3" cy="543.6" r="2.5" fill="url(#st)"/>
<circle cx="525.5" cy="544.0" r="2.7" fill="url(#st)"/>
<circle cx="428.4" cy="544.2" r="2.5" fill="url(#st)"/>
<circle cx="536.8" cy="544.4" r="2.8" fill="url(#st)"/>
<circle cx="382.8" cy="544.4" r="2.5" fill="url(#st)"/>
<circle cx="508.4" cy="544.4" r="2.7" fill="url(#st)"/>
<circle cx="463.2" cy="544.5" r="2.5" fill="url(#st)"/>
<circle cx="360.0" cy="544.6" r="2.3" fill="url(#st)"/>
<circle cx="452.6" cy="544.6" r="2.4" fill="url(#st)"/>
<circle cx="369.1" cy="544.7" r="2.3" fill="url(#st)"/>
<circle cx="374.8" cy="544.7" r="2.3" fill="url(#st)"/>
<circle cx="502.3" cy="544.7" r="2.6" fill="url(#sp)"/>
<circle cx="353.7" cy="544.7" r="2.4" fill="url(#st)"/>
<circle cx="446.8" cy="544.8" r="2.7" fill="url(#st)"/>
<circle cx="356.6" cy="544.8" r="2.2" fill="url(#st)"/>
<circle cx="517.6" cy="544.9" r="2.8" fill="url(#st)"/>
<circle cx="496.2" cy="544.9" r="2.7" fill="url(#sp)"/>
<circle cx="400.3" cy="545.1" r="2.5" fill="url(#st)"/>
<circle cx="488.3" cy="545.1" r="2.4" fill="url(#st)"/>
<circle cx="425.0" cy="545.5" r="2.4" fill="url(#st)"/>
<circle cx="391.3" cy="545.6" r="2.4" fill="url(#st)"/>
<circle cx="513.7" cy="545.8" r="2.6" fill="url(#st)"/>
<circle cx="407.6" cy="545.8" r="2.6" fill="url(#st)"/>
<circle cx="421.8" cy="545.8" r="2.4" fill="url(#st)"/>
<circle cx="474.9" cy="545.9" r="2.7" fill="url(#st)"/>
<circle cx="457.3" cy="545.9" r="2.3" fill="url(#st)"/>
<circle cx="436.6" cy="546.0" r="2.4" fill="url(#st)"/>
<circle cx="433.5" cy="546.1" r="2.4" fill="url(#st)"/>
<circle cx="363.6" cy="546.3" r="2.2" fill="url(#st)"/>
<circle cx="479.0" cy="546.7" r="2.6" fill="url(#st)"/>
<circle cx="529.4" cy="546.7" r="2.8" fill="url(#st)"/>
<circle cx="416.9" cy="547.0" r="2.2" fill="url(#st)"/>
<circle cx="380.3" cy="547.0" r="2.4" fill="url(#st)"/>
<circle cx="470.4" cy="547.1" r="2.6" fill="url(#st)"/>
<circle cx="385.1" cy="547.1" r="2.3" fill="url(#st)"/>
<circle cx="485.4" cy="547.2" r="2.5" fill="url(#st)"/>
<circle cx="492.8" cy="547.3" r="2.4" fill="url(#st)"/>
<circle cx="505.8" cy="547.3" r="2.7" fill="url(#st)"/>
<circle cx="439.4" cy="547.6" r="2.4" fill="url(#st)"/>
<circle cx="524.4" cy="547.7" r="2.6" fill="url(#st)"/>
<circle cx="511.1" cy="547.8" r="2.4" fill="url(#st)"/>
<circle cx="450.1" cy="547.8" r="2.6" fill="url(#sg)"/>
<circle cx="397.7" cy="547.9" r="2.3" fill="url(#st)"/>
<circle cx="388.3" cy="548.0" r="2.4" fill="url(#st)"/>
<circle cx="372.6" cy="548.3" r="2.3" fill="url(#st)"/>
<circle cx="444.1" cy="548.4" r="2.3" fill="url(#st)"/>
<circle cx="465.9" cy="548.5" r="2.4" fill="url(#st)"/>
<circle cx="392.5" cy="548.5" r="2.5" fill="url(#sn)"/>
<circle cx="502.3" cy="548.6" r="2.6" fill="url(#st)"/>
<circle cx="430.0" cy="548.6" r="2.4" fill="url(#st)"/>
<circle cx="496.6" cy="549.0" r="2.5" fill="url(#sp)"/>
<circle cx="413.2" cy="549.0" r="2.2" fill="url(#st)"/>
<circle cx="433.9" cy="549.1" r="2.6" fill="url(#st)"/>
<circle cx="403.0" cy="549.2" r="2.5" fill="url(#st)"/>
<circle cx="460.7" cy="549.3" r="2.5" fill="url(#st)"/>
<circle cx="476.4" cy="549.4" r="2.4" fill="url(#st)"/>
<circle cx="515.8" cy="549.5" r="2.7" fill="url(#st)"/>
<circle cx="452.7" cy="549.6" r="2.4" fill="url(#st)"/>
<circle cx="473.2" cy="549.7" r="2.6" fill="url(#st)"/>
<circle cx="480.8" cy="549.7" r="2.7" fill="url(#sg)"/>
<circle cx="426.7" cy="549.8" r="2.3" fill="url(#st)"/>
<circle cx="519.5" cy="549.9" r="2.4" fill="url(#st)"/>
<circle cx="447.5" cy="550.0" r="2.6" fill="url(#st)"/>
<circle cx="469.5" cy="550.2" r="2.3" fill="url(#st)"/>
<circle cx="407.7" cy="550.3" r="2.3" fill="url(#st)"/>
<circle cx="367.4" cy="550.3" r="2.3" fill="url(#st)"/>
<circle cx="377.7" cy="550.4" r="2.5" fill="url(#st)"/>
<circle cx="509.1" cy="550.5" r="2.6" fill="url(#st)"/>
<circle cx="422.8" cy="550.5" r="2.4" fill="url(#st)"/>
<circle cx="438.5" cy="550.5" r="2.3" fill="url(#st)"/>
<circle cx="399.7" cy="550.7" r="2.4" fill="url(#st)"/>
<circle cx="456.6" cy="550.9" r="2.7" fill="url(#st)"/>
<circle cx="419.2" cy="551.0" r="2.2" fill="url(#st)"/>
<circle cx="394.7" cy="551.1" r="2.3" fill="url(#st)"/>
<circle cx="490.3" cy="551.1" r="2.4" fill="url(#sp)"/>
<circle cx="485.9" cy="551.2" r="2.5" fill="url(#sp)"/>
<circle cx="500.0" cy="551.5" r="2.7" fill="url(#sg)"/>
<circle cx="390.2" cy="551.5" r="2.4" fill="url(#st)"/>
<circle cx="386.4" cy="551.9" r="2.3" fill="url(#st)"/>
<circle cx="495.7" cy="552.1" r="2.6" fill="url(#sp)"/>
<circle cx="429.5" cy="552.3" r="2.2" fill="url(#st)"/>
<circle cx="524.7" cy="552.3" r="2.4" fill="url(#st)"/>
<circle cx="402.9" cy="552.4" r="2.3" fill="url(#st)"/>
<circle cx="441.8" cy="552.5" r="2.6" fill="url(#st)"/>
<circle cx="435.1" cy="552.5" r="2.3" fill="url(#st)"/>
<circle cx="449.7" cy="552.5" r="2.6" fill="url(#st)"/>
<circle cx="416.0" cy="552.6" r="2.5" fill="url(#st)"/>
<circle cx="483.1" cy="552.7" r="2.4" fill="url(#sg)"/>
<circle cx="453.1" cy="552.7" r="2.4" fill="url(#st)"/>
<circle cx="477.9" cy="553.1" r="2.4" fill="url(#sg)"/>
<circle cx="466.8" cy="553.3" r="2.6" fill="url(#st)"/>
<circle cx="424.4" cy="553.3" r="2.3" fill="url(#st)"/>
<circle cx="397.2" cy="553.4" r="2.4" fill="url(#st)"/>
<circle cx="458.6" cy="553.4" r="2.4" fill="url(#st)"/>
<circle cx="471.0" cy="553.5" r="2.5" fill="url(#st)"/>
<circle cx="504.6" cy="553.6" r="2.7" fill="url(#sg)"/>
<circle cx="528.4" cy="553.8" r="2.6" fill="url(#st)"/>
<circle cx="393.0" cy="553.9" r="2.3" fill="url(#st)"/>
<circle cx="400.2" cy="554.0" r="2.4" fill="url(#st)"/>
<circle cx="381.9" cy="554.0" r="2.3" fill="url(#st)"/>
<circle cx="445.4" cy="554.1" r="2.5" fill="url(#st)"/>
<circle cx="418.9" cy="554.2" r="2.4" fill="url(#sb)"/>
<circle cx="512.6" cy="554.3" r="2.7" fill="url(#sg)"/>
<circle cx="508.6" cy="554.5" r="2.7" fill="url(#st)"/>
<circle cx="463.0" cy="554.5" r="2.4" fill="url(#sg)"/>
<circle cx="501.6" cy="554.5" r="2.5" fill="url(#st)"/>
<circle cx="516.1" cy="554.5" r="2.5" fill="url(#st)"/>
<circle cx="493.4" cy="554.5" r="2.5" fill="url(#st)"/>
<circle cx="486.1" cy="554.6" r="2.4" fill="url(#sp)"/>
<circle cx="433.0" cy="554.8" r="2.4" fill="url(#st)"/>
<circle cx="521.3" cy="554.8" r="2.4" fill="url(#st)"/>
<circle cx="405.5" cy="554.8" r="2.5" fill="url(#st)"/>
<circle cx="370.2" cy="555.3" r="2.4" fill="url(#st)"/>
<circle cx="386.8" cy="555.3" r="2.3" fill="url(#st)"/>
<circle cx="389.8" cy="555.4" r="2.5" fill="url(#st)"/>
<circle cx="412.3" cy="555.5" r="2.4" fill="url(#st)"/>
<circle cx="449.9" cy="555.6" r="2.4" fill="url(#st)"/>
<circle cx="474.9" cy="555.6" r="2.5" fill="url(#st)"/>
<circle cx="415.4" cy="555.7" r="2.5" fill="url(#st)"/>
<circle cx="395.5" cy="555.7" r="2.4" fill="url(#st)"/>
<circle cx="408.9" cy="555.8" r="2.2" fill="url(#st)"/>
<circle cx="440.4" cy="555.8" r="2.3" fill="url(#st)"/>
<circle cx="468.9" cy="556.1" r="2.6" fill="url(#st)"/>
<circle cx="455.0" cy="556.2" r="2.5" fill="url(#st)"/>
<circle cx="402.8" cy="556.3" r="2.4" fill="url(#st)"/>
<circle cx="425.3" cy="556.5" r="2.4" fill="url(#st)"/>
<circle cx="383.3" cy="556.6" r="2.2" fill="url(#st)"/>
<circle cx="479.3" cy="556.6" r="2.6" fill="url(#st)"/>
<circle cx="498.2" cy="556.7" r="2.7" fill="url(#st)"/>
<circle cx="525.7" cy="556.7" r="2.5" fill="url(#st)"/>
<circle cx="399.0" cy="556.9" r="2.4" fill="url(#st)"/>
<circle cx="429.5" cy="557.0" r="2.3" fill="url(#st)"/>
<circle cx="505.7" cy="557.1" r="2.5" fill="url(#st)"/>
<circle cx="529.5" cy="557.2" r="2.7" fill="url(#st)"/>
<circle cx="465.9" cy="557.2" r="2.5" fill="url(#st)"/>
<circle cx="446.6" cy="557.3" r="2.3" fill="url(#st)"/>
<circle cx="376.2" cy="557.4" r="2.5" fill="url(#st)"/>
<circle cx="490.8" cy="557.5" r="2.3" fill="url(#st)"/>
<circle cx="494.3" cy="557.6" r="2.6" fill="url(#st)"/>
<circle cx="472.5" cy="557.6" r="2.4" fill="url(#st)"/>
<circle cx="452.4" cy="557.8" r="2.4" fill="url(#sn)"/>
<circle cx="380.0" cy="557.9" r="2.1" fill="url(#st)"/>
<circle cx="417.8" cy="557.9" r="2.3" fill="url(#st)"/>
<circle cx="421.9" cy="558.0" r="2.5" fill="url(#st)"/>
<circle cx="388.0" cy="558.3" r="2.4" fill="url(#st)"/>
<circle cx="460.9" cy="558.3" r="2.3" fill="url(#st)"/>
<circle cx="435.7" cy="558.5" r="2.5" fill="url(#st)"/>
<circle cx="482.3" cy="558.5" r="2.4" fill="url(#sp)"/>
<circle cx="391.5" cy="558.5" r="2.1" fill="url(#st)"/>
<circle cx="411.6" cy="558.6" r="2.3" fill="url(#st)"/>
<circle cx="485.9" cy="558.6" r="2.7" fill="url(#sp)"/>
<circle cx="521.4" cy="558.8" r="2.5" fill="url(#st)"/>
<circle cx="394.6" cy="558.9" r="2.2" fill="url(#st)"/>
<circle cx="510.4" cy="559.1" r="2.7" fill="url(#st)"/>
<circle cx="405.6" cy="559.2" r="2.4" fill="url(#st)"/>
<circle cx="415.2" cy="559.4" r="2.4" fill="url(#st)"/>
<circle cx="432.8" cy="559.5" r="2.4" fill="url(#st)"/>
<circle cx="457.6" cy="559.5" r="2.5" fill="url(#st)"/>
<circle cx="443.3" cy="559.6" r="2.3" fill="url(#st)"/>
<circle cx="425.7" cy="559.6" r="2.3" fill="url(#st)"/>
<circle cx="500.5" cy="559.7" r="2.4" fill="url(#st)"/>
<circle cx="514.3" cy="559.7" r="2.6" fill="url(#st)"/>
<circle cx="468.0" cy="560.1" r="2.3" fill="url(#st)"/>
<circle cx="448.0" cy="560.2" r="2.5" fill="url(#st)"/>
<circle cx="400.8" cy="560.4" r="2.2" fill="url(#st)"/>
<circle cx="528.4" cy="560.4" r="2.6" fill="url(#st)"/>
<circle cx="439.0" cy="560.5" r="2.3" fill="url(#st)"/>
<circle cx="497.5" cy="560.5" r="2.3" fill="url(#st)"/>
<circle cx="385.9" cy="560.6" r="2.2" fill="url(#st)"/>
<circle cx="428.9" cy="560.8" r="2.5" fill="url(#st)"/>
<circle cx="389.7" cy="561.0" r="2.2" fill="url(#st)"/>
<circle cx="462.3" cy="561.2" r="2.5" fill="url(#st)"/>
<circle cx="478.1" cy="561.2" r="2.5" fill="url(#sp)"/>
<circle cx="421.2" cy="561.2" r="2.3" fill="url(#st)"/>
<circle cx="487.4" cy="561.3" r="2.3" fill="url(#st)"/>
<circle cx="451.9" cy="561.4" r="2.4" fill="url(#st)"/>
<circle cx="417.9" cy="561.5" r="2.2" fill="url(#st)"/>
<circle cx="507.1" cy="561.5" r="2.4" fill="url(#st)"/>
<circle cx="483.6" cy="561.7" r="2.3" fill="url(#st)"/>
<circle cx="409.6" cy="561.8" r="2.1" fill="url(#st)"/>
<circle cx="475.0" cy="561.9" r="2.3" fill="url(#st)"/>
<circle cx="404.0" cy="561.9" r="2.2" fill="url(#st)"/>
<circle cx="436.2" cy="562.0" r="2.3" fill="url(#st)"/>
<circle cx="396.1" cy="562.2" r="2.3" fill="url(#st)"/>
<circle cx="471.8" cy="562.2" r="2.4" fill="url(#st)"/>
<circle cx="414.4" cy="562.3" r="2.5" fill="url(#st)"/>
<circle cx="455.3" cy="562.4" r="2.5" fill="url(#st)"/>
<circle cx="492.3" cy="562.7" r="2.6" fill="url(#st)"/>
<circle cx="503.9" cy="562.8" r="2.3" fill="url(#st)"/>
<circle cx="519.8" cy="563.0" r="2.5" fill="url(#st)"/>
<circle cx="424.7" cy="563.4" r="2.3" fill="url(#st)"/>
<circle cx="514.1" cy="563.5" r="2.4" fill="url(#st)"/>
<circle cx="432.3" cy="563.6" r="2.2" fill="url(#st)"/>
<circle cx="447.0" cy="563.6" r="2.5" fill="url(#st)"/>
<circle cx="460.5" cy="563.6" r="2.6" fill="url(#st)"/>
<circle cx="406.9" cy="563.7" r="2.2" fill="url(#st)"/>
<circle cx="385.3" cy="563.8" r="2.1" fill="url(#st)"/>
<circle cx="429.1" cy="563.9" r="2.4" fill="url(#st)"/>
<circle cx="467.8" cy="564.0" r="2.3" fill="url(#st)"/>
<circle cx="510.7" cy="564.0" r="2.3" fill="url(#st)"/>
<circle cx="393.1" cy="564.0" r="2.4" fill="url(#st)"/>
<circle cx="399.6" cy="564.1" r="2.3" fill="url(#st)"/>
<circle cx="524.0" cy="564.2" r="2.5" fill="url(#st)"/>
<circle cx="411.5" cy="564.3" r="2.3" fill="url(#st)"/>
<circle cx="489.2" cy="564.3" r="2.4" fill="url(#st)"/>
<circle cx="417.7" cy="564.4" r="2.2" fill="url(#st)"/>
<circle cx="495.3" cy="564.5" r="2.4" fill="url(#st)"/>
<circle cx="441.1" cy="564.5" r="2.4" fill="url(#st)"/>
<circle cx="444.2" cy="564.7" r="2.4" fill="url(#st)"/>
<circle cx="422.1" cy="564.8" r="2.3" fill="url(#st)"/>
<circle cx="501.3" cy="564.8" r="2.3" fill="url(#sg)"/>
<circle cx="436.8" cy="565.0" r="2.5" fill="url(#st)"/>
<circle cx="480.6" cy="565.0" r="2.5" fill="url(#sp)"/>
<circle cx="507.8" cy="565.3" r="2.5" fill="url(#st)"/>
<circle cx="486.0" cy="565.5" r="2.2" fill="url(#st)"/>
<circle cx="473.6" cy="565.5" r="2.3" fill="url(#st)"/>
<circle cx="396.8" cy="565.6" r="2.1" fill="url(#st)"/>
<circle cx="464.5" cy="565.8" r="2.5" fill="url(#st)"/>
<circle cx="389.1" cy="566.1" r="2.2" fill="url(#st)"/>
<circle cx="453.6" cy="566.3" r="2.2" fill="url(#st)"/>
<circle cx="492.0" cy="566.4" r="2.6" fill="url(#st)"/>
<circle cx="449.7" cy="566.6" r="2.2" fill="url(#st)"/>
<circle cx="457.0" cy="566.6" r="2.5" fill="url(#st)"/>
<circle cx="391.9" cy="566.8" r="2.1" fill="url(#st)"/>
<circle cx="477.5" cy="566.9" r="2.4" fill="url(#st)"/>
<circle cx="407.5" cy="566.9" r="2.4" fill="url(#st)"/>
<circle cx="424.2" cy="567.3" r="2.5" fill="url(#st)"/>
<circle cx="399.5" cy="567.6" r="2.1" fill="url(#st)"/>
<circle cx="462.0" cy="567.6" r="2.2" fill="url(#st)"/>
<circle cx="495.9" cy="567.6" r="2.3" fill="url(#sw)"/>
<circle cx="469.2" cy="567.7" r="2.2" fill="url(#st)"/>
<circle cx="418.1" cy="567.7" r="2.4" fill="url(#st)"/>
<circle cx="434.0" cy="567.7" r="2.5" fill="url(#st)"/>
<circle cx="404.6" cy="567.8" r="2.1" fill="url(#st)"/>
<circle cx="522.4" cy="568.2" r="2.4" fill="url(#st)"/>
<circle cx="489.5" cy="568.3" r="2.6" fill="url(#st)"/>
<circle cx="445.7" cy="568.3" r="2.4" fill="url(#st)"/>
<circle cx="512.5" cy="568.4" r="2.5" fill="url(#st)"/>
<circle cx="395.9" cy="568.5" r="2.1" fill="url(#st)"/>
<circle cx="442.5" cy="568.6" r="2.3" fill="url(#st)"/>
<circle cx="465.6" cy="568.7" r="2.5" fill="url(#st)"/>
<circle cx="438.0" cy="568.8" r="2.4" fill="url(#st)"/>
<circle cx="517.8" cy="569.0" r="2.6" fill="url(#st)"/>
<circle cx="389.2" cy="569.0" r="2.1" fill="url(#st)"/>
<circle cx="431.0" cy="569.0" r="2.2" fill="url(#st)"/>
<circle cx="427.0" cy="569.2" r="2.3" fill="url(#st)"/>
<circle cx="412.2" cy="569.2" r="2.4" fill="url(#st)"/>
<circle cx="505.4" cy="569.2" r="2.6" fill="url(#st)"/>
<circle cx="481.8" cy="569.5" r="2.3" fill="url(#st)"/>
<circle cx="473.8" cy="569.6" r="2.4" fill="url(#st)"/>
<circle cx="498.4" cy="569.7" r="2.4" fill="url(#st)"/>
<circle cx="408.6" cy="569.9" r="2.3" fill="url(#st)"/>
<circle cx="401.3" cy="570.0" r="2.1" fill="url(#st)"/>
<circle cx="455.7" cy="570.1" r="2.4" fill="url(#st)"/>
<circle cx="485.8" cy="570.1" r="2.4" fill="url(#st)"/>
<circle cx="493.4" cy="570.1" r="2.2" fill="url(#st)"/>
<circle cx="502.1" cy="570.4" r="2.6" fill="url(#st)"/>
<circle cx="449.3" cy="570.6" r="2.3" fill="url(#st)"/>
<circle cx="477.2" cy="570.6" r="2.3" fill="url(#st)"/>
<circle cx="414.5" cy="570.8" r="2.4" fill="url(#st)"/>
<circle cx="463.4" cy="570.9" r="2.3" fill="url(#st)"/>
<circle cx="460.3" cy="570.9" r="2.2" fill="url(#st)"/>
<circle cx="508.8" cy="570.9" r="2.4" fill="url(#st)"/>
<circle cx="387.1" cy="570.9" r="2.1" fill="url(#st)"/>
<circle cx="423.9" cy="571.0" r="2.2" fill="url(#st)"/>
<circle cx="398.5" cy="571.2" r="2.2" fill="url(#st)"/>
<circle cx="512.9" cy="571.4" r="2.3" fill="url(#st)"/>
<circle cx="441.0" cy="571.5" r="2.3" fill="url(#st)"/>
<circle cx="467.6" cy="571.6" r="2.5" fill="url(#st)"/>
<circle cx="444.8" cy="571.6" r="2.4" fill="url(#st)"/>
<circle cx="403.5" cy="571.7" r="2.1" fill="url(#st)"/>
<circle cx="420.8" cy="571.8" r="2.2" fill="url(#st)"/>
<circle cx="435.3" cy="572.3" r="2.2" fill="url(#sn)"/>
<circle cx="520.1" cy="572.5" r="2.6" fill="url(#st)"/>
<circle cx="393.2" cy="572.6" r="2.2" fill="url(#st)"/>
<circle cx="497.3" cy="572.8" r="2.4" fill="url(#st)"/>
<circle cx="482.7" cy="572.8" r="2.4" fill="url(#st)"/>
<circle cx="515.9" cy="573.1" r="2.4" fill="url(#st)"/>
<circle cx="492.8" cy="573.2" r="2.4" fill="url(#st)"/>
<circle cx="417.6" cy="573.2" r="2.3" fill="url(#sn)"/>
<circle cx="450.7" cy="573.3" r="2.2" fill="url(#st)"/>
<circle cx="474.7" cy="573.5" r="2.3" fill="url(#st)"/>
<circle cx="506.3" cy="573.6" r="2.5" fill="url(#st)"/>
<circle cx="438.8" cy="573.7" r="2.3" fill="url(#st)"/>
<circle cx="458.1" cy="573.7" r="2.5" fill="url(#st)"/>
<circle cx="386.7" cy="573.7" r="2.1" fill="url(#st)"/>
<circle cx="414.2" cy="573.8" r="2.4" fill="url(#st)"/>
<circle cx="462.9" cy="573.9" r="2.5" fill="url(#st)"/>
<circle cx="479.6" cy="574.1" r="2.4" fill="url(#st)"/>
<circle cx="432.1" cy="574.1" r="2.2" fill="url(#st)"/>
<circle cx="470.5" cy="574.2" r="2.4" fill="url(#st)"/>
<circle cx="401.8" cy="574.3" r="2.1" fill="url(#st)"/>
<circle cx="501.7" cy="574.3" r="2.3" fill="url(#st)"/>
<circle cx="511.1" cy="574.7" r="2.3" fill="url(#st)"/>
<circle cx="466.5" cy="574.9" r="2.3" fill="url(#st)"/>
<circle cx="486.7" cy="575.2" r="2.4" fill="url(#st)"/>
<circle cx="420.2" cy="575.2" r="2.4" fill="url(#st)"/>
<circle cx="406.0" cy="575.5" r="2.1" fill="url(#st)"/>
<circle cx="394.5" cy="575.7" r="2.1" fill="url(#st)"/>
<circle cx="410.6" cy="575.7" r="2.2" fill="url(#st)"/>
<circle cx="447.5" cy="575.8" r="2.3" fill="url(#st)"/>
<circle cx="427.4" cy="576.1" r="2.2" fill="url(#st)"/>
<circle cx="389.4" cy="576.1" r="2.3" fill="url(#st)"/>
<circle cx="482.7" cy="576.1" r="2.2" fill="url(#st)"/>
<circle cx="434.8" cy="576.1" r="2.2" fill="url(#st)"/>
<circle cx="516.6" cy="576.2" r="2.4" fill="url(#st)"/>
<circle cx="499.6" cy="576.4" r="2.5" fill="url(#st)"/>
<circle cx="491.7" cy="577.1" r="2.2" fill="url(#st)"/>
<circle cx="474.4" cy="577.2" r="2.3" fill="url(#st)"/>
<circle cx="454.8" cy="577.3" r="2.2" fill="url(#st)"/>
<circle cx="414.9" cy="577.3" r="2.1" fill="url(#st)"/>
<circle cx="397.5" cy="577.4" r="2.2" fill="url(#st)"/>
<circle cx="440.3" cy="577.4" r="2.4" fill="url(#st)"/>
<circle cx="423.2" cy="577.4" r="2.2" fill="url(#st)"/>
<circle cx="464.6" cy="577.5" r="2.4" fill="url(#st)"/>
<circle cx="431.7" cy="577.6" r="2.1" fill="url(#st)"/>
<circle cx="496.2" cy="577.6" r="2.2" fill="url(#st)"/>
<circle cx="470.2" cy="577.7" r="2.4" fill="url(#st)"/>
<circle cx="450.0" cy="577.7" r="2.3" fill="url(#st)"/>
<circle cx="419.1" cy="577.8" r="2.2" fill="url(#st)"/>
<circle cx="458.8" cy="577.9" r="2.4" fill="url(#st)"/>
<circle cx="513.1" cy="578.0" r="2.6" fill="url(#st)"/>
<circle cx="509.1" cy="578.1" r="2.5" fill="url(#st)"/>
<circle cx="477.3" cy="578.1" r="2.5" fill="url(#st)"/>
<circle cx="505.8" cy="578.9" r="2.2" fill="url(#st)"/>
<circle cx="428.0" cy="579.0" r="2.1" fill="url(#st)"/>
<circle cx="434.8" cy="579.6" r="2.1" fill="url(#st)"/>
<circle cx="410.6" cy="579.6" r="2.1" fill="url(#st)"/>
<circle cx="480.9" cy="579.7" r="2.4" fill="url(#st)"/>
<circle cx="405.3" cy="579.9" r="2.2" fill="url(#st)"/>
<circle cx="484.0" cy="579.9" r="2.3" fill="url(#st)"/>
<circle cx="502.2" cy="580.1" r="2.2" fill="url(#st)"/>
<circle cx="425.5" cy="580.3" r="2.3" fill="url(#st)"/>
<circle cx="492.5" cy="580.3" r="2.4" fill="url(#st)"/>
<circle cx="463.1" cy="580.4" r="2.4" fill="url(#st)"/>
<circle cx="446.1" cy="580.4" r="2.3" fill="url(#st)"/>
<circle cx="497.2" cy="580.5" r="2.4" fill="url(#st)"/>
<circle cx="453.0" cy="580.6" r="2.5" fill="url(#sn)"/>
<circle cx="469.0" cy="580.7" r="2.2" fill="url(#st)"/>
<circle cx="420.9" cy="580.8" r="2.1" fill="url(#st)"/>
<circle cx="489.6" cy="580.8" r="2.4" fill="url(#st)"/>
<circle cx="430.7" cy="580.9" r="2.4" fill="url(#sn)"/>
<circle cx="449.7" cy="581.3" r="2.4" fill="url(#st)"/>
<circle cx="473.8" cy="581.4" r="2.2" fill="url(#st)"/>
<circle cx="465.8" cy="581.5" r="2.3" fill="url(#st)"/>
<circle cx="438.9" cy="581.5" r="2.3" fill="url(#st)"/>
<circle cx="401.7" cy="581.7" r="2.2" fill="url(#st)"/>
<circle cx="460.2" cy="581.9" r="2.2" fill="url(#st)"/>
<circle cx="478.2" cy="581.9" r="2.4" fill="url(#st)"/>
<circle cx="515.0" cy="582.0" r="2.3" fill="url(#st)"/>
<circle cx="507.1" cy="582.2" r="2.4" fill="url(#st)"/>
<circle cx="456.7" cy="582.5" r="2.4" fill="url(#sn)"/>
<circle cx="502.3" cy="583.1" r="2.4" fill="url(#st)"/>
<circle cx="495.4" cy="583.2" r="2.4" fill="url(#st)"/>
<circle cx="445.9" cy="583.3" r="2.1" fill="url(#st)"/>
<circle cx="442.9" cy="583.4" r="2.2" fill="url(#st)"/>
<circle cx="480.9" cy="583.6" r="2.3" fill="url(#st)"/>
<circle cx="452.1" cy="583.9" r="2.3" fill="url(#sb)"/>
<circle cx="472.3" cy="583.9" r="2.2" fill="url(#st)"/>
<circle cx="463.6" cy="584.0" r="2.1" fill="url(#st)"/>
<circle cx="422.7" cy="584.0" r="2.2" fill="url(#st)"/>
<circle cx="487.7" cy="584.3" r="2.4" fill="url(#st)"/>
<circle cx="433.1" cy="584.4" r="2.3" fill="url(#st)"/>
<circle cx="469.2" cy="584.6" r="2.4" fill="url(#st)"/>
<circle cx="407.4" cy="584.7" r="2.3" fill="url(#st)"/>
<circle cx="460.1" cy="584.8" r="2.1" fill="url(#st)"/>
<circle cx="448.7" cy="585.0" r="2.4" fill="url(#st)"/>
<circle cx="426.5" cy="585.1" r="2.1" fill="url(#st)"/>
<circle cx="437.2" cy="585.2" r="2.2" fill="url(#st)"/>
<circle cx="484.4" cy="585.3" r="2.4" fill="url(#st)"/>
<circle cx="492.8" cy="585.8" r="2.4" fill="url(#st)"/>
<circle cx="498.4" cy="586.0" r="2.5" fill="url(#st)"/>
<circle cx="454.0" cy="586.0" r="2.4" fill="url(#st)"/>
<circle cx="440.3" cy="586.3" r="2.2" fill="url(#st)"/>
<circle cx="510.1" cy="586.3" r="2.5" fill="url(#st)"/>
<circle cx="415.6" cy="586.4" r="2.0" fill="url(#st)"/>
<circle cx="429.3" cy="586.4" r="2.2" fill="url(#st)"/>
<circle cx="445.0" cy="586.8" r="2.4" fill="url(#sw)"/>
<circle cx="463.0" cy="586.9" r="2.3" fill="url(#st)"/>
<circle cx="473.0" cy="587.1" r="2.4" fill="url(#st)"/>
<circle cx="482.2" cy="587.5" r="2.4" fill="url(#sb)"/>
<circle cx="456.6" cy="587.8" r="2.1" fill="url(#st)"/>
<circle cx="486.4" cy="588.0" r="2.3" fill="url(#st)"/>
<circle cx="476.8" cy="588.0" r="2.2" fill="url(#st)"/>
<circle cx="505.8" cy="588.0" r="2.2" fill="url(#st)"/>
<circle cx="490.0" cy="588.2" r="2.2" fill="url(#st)"/>
<circle cx="417.6" cy="588.4" r="2.0" fill="url(#st)"/>
<circle cx="494.2" cy="588.6" r="2.3" fill="url(#st)"/>
<circle cx="468.5" cy="588.7" r="2.3" fill="url(#st)"/>
<circle cx="459.5" cy="589.1" r="2.3" fill="url(#st)"/>
<circle cx="499.2" cy="589.1" r="2.5" fill="url(#st)"/>
<circle cx="513.4" cy="589.1" r="2.4" fill="url(#st)"/>
<circle cx="420.4" cy="589.2" r="2.2" fill="url(#st)"/>
<circle cx="427.6" cy="589.3" r="2.1" fill="url(#st)"/>
<circle cx="451.9" cy="589.7" r="2.2" fill="url(#st)"/>
<circle cx="441.2" cy="589.8" r="2.3" fill="url(#st)"/>
<circle cx="462.7" cy="589.9" r="2.2" fill="url(#st)"/>
<circle cx="509.2" cy="590.1" r="2.4" fill="url(#st)"/>
<circle cx="471.0" cy="590.2" r="2.3" fill="url(#st)"/>
<circle cx="444.0" cy="591.4" r="2.0" fill="url(#sn)"/>
<circle cx="479.3" cy="591.4" r="2.2" fill="url(#st)"/>
<circle cx="425.0" cy="591.4" r="2.2" fill="url(#st)"/>
<circle cx="502.5" cy="591.5" r="2.3" fill="url(#st)"/>
<circle cx="475.6" cy="591.6" r="2.3" fill="url(#st)"/>
<circle cx="458.3" cy="591.7" r="2.1" fill="url(#st)"/>
<circle cx="484.2" cy="591.9" r="2.2" fill="url(#st)"/>
<circle cx="490.1" cy="592.1" r="2.1" fill="url(#st)"/>
<circle cx="432.9" cy="592.2" r="2.1" fill="url(#st)"/>
<circle cx="449.7" cy="592.5" r="2.3" fill="url(#sb)"/>
<circle cx="467.6" cy="592.6" r="2.3" fill="url(#st)"/>
<circle cx="494.6" cy="592.7" r="2.4" fill="url(#st)"/>
<circle cx="439.3" cy="592.8" r="2.0" fill="url(#st)"/>
<circle cx="504.9" cy="593.4" r="2.5" fill="url(#st)"/>
<circle cx="508.5" cy="593.5" r="2.4" fill="url(#st)"/>
<circle cx="429.5" cy="593.5" r="2.2" fill="url(#st)"/>
<circle cx="463.6" cy="593.8" r="2.0" fill="url(#st)"/>
<circle cx="478.5" cy="594.1" r="2.3" fill="url(#st)"/>
<circle cx="443.6" cy="594.3" r="2.1" fill="url(#st)"/>
<circle cx="491.9" cy="594.6" r="2.2" fill="url(#st)"/>
<circle cx="481.5" cy="595.0" r="2.1" fill="url(#st)"/>
<circle cx="473.4" cy="595.1" r="2.3" fill="url(#st)"/>
<circle cx="510.8" cy="595.3" r="2.3" fill="url(#st)"/>
<circle cx="458.2" cy="595.4" r="2.3" fill="url(#st)"/>
<circle cx="450.6" cy="595.8" r="2.3" fill="url(#st)"/>
<circle cx="435.2" cy="596.0" r="2.0" fill="url(#st)"/>
<circle cx="440.8" cy="596.3" r="2.0" fill="url(#st)"/>
<circle cx="500.9" cy="596.4" r="2.3" fill="url(#st)"/>
<circle cx="487.7" cy="596.5" r="2.1" fill="url(#st)"/>
<circle cx="476.9" cy="596.6" r="2.1" fill="url(#st)"/>
<circle cx="460.8" cy="596.7" r="2.0" fill="url(#st)"/>
<circle cx="466.0" cy="596.8" r="2.2" fill="url(#st)"/>
<circle cx="469.3" cy="597.0" r="2.3" fill="url(#st)"/>
<circle cx="505.4" cy="597.1" r="2.4" fill="url(#st)"/>
<circle cx="491.1" cy="597.4" r="2.2" fill="url(#st)"/>
<circle cx="496.0" cy="597.5" r="2.4" fill="url(#st)"/>
<circle cx="455.5" cy="597.5" r="2.2" fill="url(#st)"/>
<circle cx="447.7" cy="597.9" r="2.0" fill="url(#st)"/>
<circle cx="483.4" cy="598.3" r="2.2" fill="url(#st)"/>
<circle cx="464.1" cy="599.3" r="2.3" fill="url(#st)"/>
<circle cx="507.4" cy="599.5" r="2.2" fill="url(#st)"/>
<circle cx="487.8" cy="599.8" r="2.1" fill="url(#st)"/>
<circle cx="479.7" cy="600.0" r="2.1" fill="url(#st)"/>
<circle cx="497.5" cy="600.1" r="2.1" fill="url(#st)"/>
<circle cx="494.6" cy="600.3" r="2.1" fill="url(#st)"/>
<circle cx="461.6" cy="600.6" r="2.2" fill="url(#st)"/>
<circle cx="475.4" cy="601.0" r="2.1" fill="url(#st)"/>
<circle cx="453.1" cy="602.1" r="2.2" fill="url(#st)"/>
<circle cx="468.8" cy="602.4" r="2.1" fill="url(#st)"/>
<circle cx="459.6" cy="602.5" r="2.1" fill="url(#st)"/>
<circle cx="462.8" cy="603.1" r="2.1" fill="url(#st)"/>
<circle cx="465.9" cy="603.3" r="2.3" fill="url(#st)"/>
<circle cx="479.2" cy="603.3" r="2.3" fill="url(#st)"/>
<circle cx="499.9" cy="604.0" r="2.3" fill="url(#st)"/>
<circle cx="503.2" cy="604.1" r="2.0" fill="url(#st)"/>
<circle cx="492.7" cy="604.3" r="2.3" fill="url(#st)"/>
<circle cx="475.6" cy="604.5" r="2.3" fill="url(#st)"/>
<circle cx="485.0" cy="604.9" r="2.0" fill="url(#st)"/>
<circle cx="507.5" cy="604.9" r="2.0" fill="url(#st)"/>
<circle cx="472.2" cy="605.5" r="2.0" fill="url(#st)"/>
<circle cx="495.5" cy="605.6" r="2.1" fill="url(#st)"/>
<circle cx="488.8" cy="605.7" r="2.1" fill="url(#st)"/>
<circle cx="465.5" cy="606.3" r="2.1" fill="url(#st)"/>
<circle cx="505.2" cy="607.0" r="2.1" fill="url(#st)"/>
<circle cx="499.3" cy="607.5" r="2.2" fill="url(#st)"/>
<circle cx="477.2" cy="607.9" r="2.0" fill="url(#st)"/>
<circle cx="482.6" cy="608.1" r="2.0" fill="url(#st)"/>
<circle cx="486.9" cy="608.4" r="2.1" fill="url(#st)"/>
<circle cx="495.3" cy="609.0" r="2.0" fill="url(#st)"/>
<circle cx="483.5" cy="610.7" r="2.0" fill="url(#st)"/>
<circle cx="489.5" cy="611.5" r="2.2" fill="url(#st)"/>
<circle cx="496.2" cy="611.8" r="2.1" fill="url(#st)"/>
<circle cx="492.2" cy="612.2" r="2.0" fill="url(#st)"/>
<circle cx="498.9" cy="614.5" r="2.3" fill="url(#st)"/>
<circle cx="492.8" cy="615.4" r="2.0" fill="url(#st)"/>
<path d="M357 560L368 549" stroke="#d02020" stroke-width="3"/>
<path d="M356 563L374 570" stroke="#20c020" stroke-width="6"/><path d="M373 565L380 572L372 575Z" fill="#20a020"/>
<path d="M352 568L360 577" stroke="#1010d0" stroke-width="7"/>
<text x="380" y="576" fill="#fff" font-size="7" font-family="Liberation Sans">y</text>
<text x="355" y="584" fill="#fff" font-size="6" font-family="Liberation Sans">z</text>
</svg>
</div>
<svg class="a" style="left:299px;top:312px" width="16" height="16"><rect width="16" height="16" fill="#000"/><path d="M1.3 4.2L3 10.6L4.7 4.2" stroke="#c82828" stroke-width="1.1" fill="none"/><path d="M5.8 10.6V4.2L7.6 8L9.4 4.2V10.6" stroke="#30d030" stroke-width="1.2" fill="none"/><path d="M11.2 4.2V10.6H12.2Q14.6 10.6 14.6 7.4Q14.6 4.2 12.2 4.2Z" stroke="#2828c8" stroke-width="1.2" fill="none"/></svg>
<div class="t" style="left:319px;top:315px;font-weight:bold;font-size:13px;letter-spacing:0">VMD 1.8.5 OpenGL Display</div>
<div class="a" style="left:554px;top:310px;width:21px;height:21px;border:1px solid #9898b0;border-radius:3px;background:linear-gradient(135deg,#f4f4f8,#dcdce8 50%,#b8b8cc);box-shadow:inset 1px 1px 0 #fff"><div class="a" style="left:4px;top:12px;width:8px;height:3px;background:#303048;box-shadow:0 1px 0 #fff"></div></div>
<div class="a" style="left:577px;top:310px;width:21px;height:21px;border:1px solid #9898b0;border-radius:3px;background:linear-gradient(135deg,#f4f4f8,#dcdce8 50%,#b8b8cc);box-shadow:inset 1px 1px 0 #fff"><div class="a" style="left:4px;top:4px;width:11px;height:11px;border:1px solid #303048;border-top-width:3px"></div></div>
<div class="a" style="left:600px;top:310px;width:21px;height:21px;border:1px solid #b04848;border-radius:3px;background:linear-gradient(135deg,#f4a0a0,#e06060 50%,#c84040);box-shadow:inset 1px 1px 0 #f8c0c0"><svg class="a" style="left:3px;top:3px" width="13" height="13"><path d="M1.5 1.5L11.5 11.5M11.5 1.5L1.5 11.5" stroke="#a03030" stroke-width="3"/><path d="M1.5 1.5L11.5 11.5M11.5 1.5L1.5 11.5" stroke="#fff" stroke-width="1.8"/></svg></div>
</body></html>
